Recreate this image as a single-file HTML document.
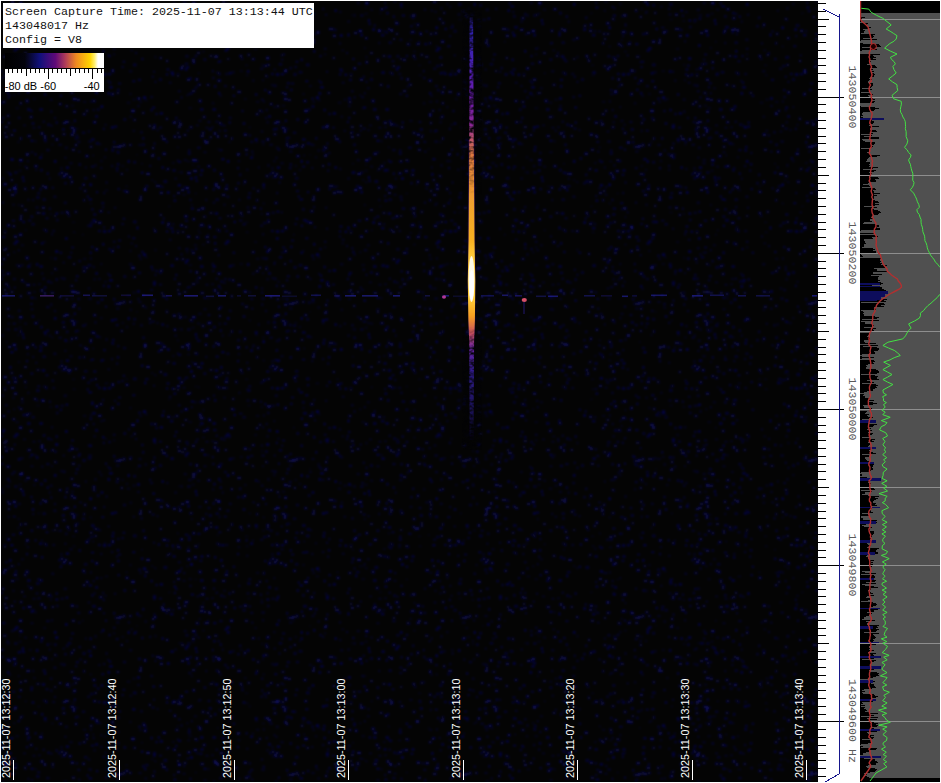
<!DOCTYPE html><html><head><meta charset="utf-8"><style>html,body{margin:0;padding:0;background:#fff;overflow:hidden}svg{display:block}</style></head><body>
<svg width="941" height="783" viewBox="0 0 941 783">
<defs><filter id="nb" x="0" y="0" width="100%" height="100%"><feGaussianBlur stdDeviation="0.9"/></filter><pattern id="p1" patternUnits="userSpaceOnUse" x="1" y="1" width="173" height="157"><g fill="#1212a0"><ellipse cx="41.2" cy="85.4" rx="1.2" ry="1.1" fill-opacity="0.44"/><ellipse cx="11.3" cy="2.1" rx="1.8" ry="0.9" fill-opacity="0.25"/><ellipse cx="172.2" cy="73.8" rx="1.8" ry="1.0" fill-opacity="0.45"/><ellipse cx="26.1" cy="99.7" rx="1.8" ry="1.1" fill-opacity="0.50"/><ellipse cx="116.2" cy="10.1" rx="1.7" ry="1.1" fill-opacity="0.28"/><ellipse cx="5.4" cy="135.9" rx="1.4" ry="1.2" fill-opacity="0.56"/><ellipse cx="123.5" cy="144.6" rx="1.3" ry="1.3" fill-opacity="0.35"/><ellipse cx="161.9" cy="138.0" rx="0.9" ry="0.8" fill-opacity="0.24"/><ellipse cx="167.0" cy="68.5" rx="1.6" ry="0.9" fill-opacity="0.38"/><ellipse cx="66.8" cy="55.1" rx="1.5" ry="1.1" fill-opacity="0.57"/><ellipse cx="118.0" cy="145.8" rx="1.8" ry="1.4" fill-opacity="0.46"/><ellipse cx="28.2" cy="135.1" rx="2.0" ry="1.3" fill-opacity="0.41"/><ellipse cx="123.5" cy="33.1" rx="1.8" ry="1.1" fill-opacity="0.28"/><ellipse cx="11.0" cy="134.1" rx="2.0" ry="0.8" fill-opacity="0.52"/><ellipse cx="71.0" cy="23.7" rx="1.2" ry="1.2" fill-opacity="0.56"/><ellipse cx="7.6" cy="96.5" rx="0.9" ry="1.2" fill-opacity="0.30"/><ellipse cx="152.4" cy="154.0" rx="1.4" ry="1.4" fill-opacity="0.29"/><ellipse cx="13.3" cy="94.2" rx="0.8" ry="0.8" fill-opacity="0.34"/><ellipse cx="105.6" cy="24.5" rx="0.9" ry="1.3" fill-opacity="0.29"/><ellipse cx="165.8" cy="140.8" rx="1.3" ry="1.0" fill-opacity="0.39"/><ellipse cx="111.4" cy="93.5" rx="1.5" ry="1.1" fill-opacity="0.59"/><ellipse cx="87.7" cy="67.7" rx="1.7" ry="0.9" fill-opacity="0.28"/><ellipse cx="169.2" cy="81.8" rx="1.5" ry="0.7" fill-opacity="0.34"/><ellipse cx="100.3" cy="3.1" rx="1.5" ry="1.1" fill-opacity="0.17"/><ellipse cx="108.5" cy="73.2" rx="1.6" ry="0.9" fill-opacity="0.48"/><ellipse cx="127.7" cy="3.5" rx="0.9" ry="1.2" fill-opacity="0.60"/><ellipse cx="43.4" cy="71.6" rx="1.5" ry="0.9" fill-opacity="0.31"/><ellipse cx="54.1" cy="58.0" rx="1.5" ry="0.9" fill-opacity="0.32"/><ellipse cx="133.6" cy="4.2" rx="1.5" ry="1.2" fill-opacity="0.29"/><ellipse cx="38.5" cy="126.2" rx="1.1" ry="0.8" fill-opacity="0.35"/><ellipse cx="120.8" cy="16.0" rx="1.2" ry="0.9" fill-opacity="0.54"/><ellipse cx="75.8" cy="134.3" rx="1.0" ry="0.9" fill-opacity="0.45"/><ellipse cx="153.1" cy="70.8" rx="1.1" ry="0.8" fill-opacity="0.39"/><ellipse cx="33.0" cy="126.7" rx="1.8" ry="0.8" fill-opacity="0.27"/><ellipse cx="139.7" cy="100.8" rx="1.8" ry="0.9" fill-opacity="0.20"/><ellipse cx="50.5" cy="124.6" rx="1.1" ry="0.9" fill-opacity="0.34"/><ellipse cx="72.6" cy="64.3" rx="1.9" ry="0.8" fill-opacity="0.14"/><ellipse cx="163.2" cy="138.2" rx="2.0" ry="1.0" fill-opacity="0.60"/><ellipse cx="160.4" cy="34.9" rx="1.7" ry="1.3" fill-opacity="0.46"/><ellipse cx="89.8" cy="45.4" rx="1.2" ry="0.9" fill-opacity="0.17"/><ellipse cx="101.8" cy="45.1" rx="1.8" ry="0.7" fill-opacity="0.57"/><ellipse cx="120.0" cy="145.0" rx="1.9" ry="1.3" fill-opacity="0.42"/><ellipse cx="2.3" cy="117.0" rx="1.0" ry="0.9" fill-opacity="0.46"/><ellipse cx="90.8" cy="65.0" rx="1.9" ry="1.1" fill-opacity="0.30"/><ellipse cx="43.7" cy="135.3" rx="1.4" ry="1.2" fill-opacity="0.31"/><ellipse cx="34.1" cy="83.9" rx="1.8" ry="0.8" fill-opacity="0.52"/><ellipse cx="159.5" cy="126.6" rx="1.8" ry="0.7" fill-opacity="0.44"/><ellipse cx="149.2" cy="7.8" rx="1.1" ry="0.9" fill-opacity="0.39"/><ellipse cx="73.2" cy="74.2" rx="1.7" ry="0.7" fill-opacity="0.17"/><ellipse cx="21.9" cy="19.6" rx="0.9" ry="1.4" fill-opacity="0.55"/><ellipse cx="14.9" cy="78.8" rx="1.2" ry="0.9" fill-opacity="0.31"/><ellipse cx="111.9" cy="92.1" rx="1.2" ry="0.8" fill-opacity="0.30"/><ellipse cx="21.4" cy="87.2" rx="1.7" ry="1.0" fill-opacity="0.18"/><ellipse cx="30.9" cy="58.6" rx="1.5" ry="1.2" fill-opacity="0.32"/><ellipse cx="138.6" cy="97.8" rx="1.3" ry="1.0" fill-opacity="0.38"/><ellipse cx="121.6" cy="66.0" rx="1.6" ry="1.0" fill-opacity="0.26"/><ellipse cx="92.7" cy="109.1" rx="0.9" ry="1.0" fill-opacity="0.34"/><ellipse cx="152.2" cy="147.0" rx="1.2" ry="1.3" fill-opacity="0.52"/><ellipse cx="45.4" cy="72.9" rx="0.9" ry="1.3" fill-opacity="0.46"/><ellipse cx="153.5" cy="124.4" rx="1.6" ry="1.2" fill-opacity="0.41"/><ellipse cx="17.8" cy="92.3" rx="0.8" ry="0.8" fill-opacity="0.51"/><ellipse cx="7.7" cy="14.4" rx="0.9" ry="1.3" fill-opacity="0.23"/><ellipse cx="4.1" cy="132.1" rx="0.9" ry="1.3" fill-opacity="0.46"/><ellipse cx="144.7" cy="149.5" rx="1.5" ry="1.3" fill-opacity="0.16"/><ellipse cx="132.8" cy="80.3" rx="1.7" ry="0.8" fill-opacity="0.50"/><ellipse cx="161.7" cy="9.6" rx="1.2" ry="1.1" fill-opacity="0.54"/><ellipse cx="41.9" cy="28.2" rx="1.1" ry="1.1" fill-opacity="0.50"/><ellipse cx="68.1" cy="57.7" rx="1.3" ry="0.9" fill-opacity="0.34"/><ellipse cx="14.4" cy="78.5" rx="2.0" ry="1.0" fill-opacity="0.50"/><ellipse cx="27.8" cy="108.5" rx="1.7" ry="1.2" fill-opacity="0.39"/><ellipse cx="83.7" cy="100.9" rx="1.9" ry="0.8" fill-opacity="0.19"/><ellipse cx="129.4" cy="143.9" rx="1.4" ry="1.0" fill-opacity="0.49"/><ellipse cx="32.2" cy="42.0" rx="1.0" ry="1.1" fill-opacity="0.29"/><ellipse cx="40.2" cy="108.5" rx="1.9" ry="0.9" fill-opacity="0.48"/><ellipse cx="71.5" cy="134.0" rx="1.5" ry="0.9" fill-opacity="0.24"/><ellipse cx="4.0" cy="75.3" rx="1.3" ry="0.8" fill-opacity="0.31"/><ellipse cx="55.7" cy="121.6" rx="1.0" ry="1.4" fill-opacity="0.37"/><ellipse cx="103.6" cy="73.5" rx="1.8" ry="1.3" fill-opacity="0.41"/><ellipse cx="83.3" cy="113.2" rx="1.8" ry="1.0" fill-opacity="0.49"/><ellipse cx="166.1" cy="73.4" rx="1.1" ry="0.9" fill-opacity="0.48"/><ellipse cx="116.8" cy="150.5" rx="1.8" ry="0.9" fill-opacity="0.23"/><ellipse cx="44.7" cy="29.4" rx="1.6" ry="1.3" fill-opacity="0.57"/><ellipse cx="44.1" cy="135.8" rx="1.2" ry="1.0" fill-opacity="0.49"/><ellipse cx="14.9" cy="14.5" rx="1.8" ry="0.9" fill-opacity="0.31"/><ellipse cx="100.4" cy="106.1" rx="0.8" ry="0.9" fill-opacity="0.35"/><ellipse cx="84.1" cy="33.0" rx="1.5" ry="1.4" fill-opacity="0.33"/><ellipse cx="94.2" cy="18.7" rx="1.1" ry="1.2" fill-opacity="0.19"/><ellipse cx="153.5" cy="142.7" rx="0.9" ry="1.4" fill-opacity="0.32"/><ellipse cx="133.6" cy="118.9" rx="1.2" ry="1.2" fill-opacity="0.45"/><ellipse cx="139.4" cy="41.7" rx="1.7" ry="1.4" fill-opacity="0.46"/><ellipse cx="92.8" cy="17.8" rx="1.4" ry="0.9" fill-opacity="0.48"/><ellipse cx="117.4" cy="88.9" rx="1.0" ry="1.2" fill-opacity="0.44"/><ellipse cx="31.0" cy="139.7" rx="1.6" ry="0.8" fill-opacity="0.59"/><ellipse cx="24.5" cy="52.1" rx="1.7" ry="1.1" fill-opacity="0.41"/><ellipse cx="112.0" cy="71.9" rx="1.2" ry="0.8" fill-opacity="0.17"/><ellipse cx="123.8" cy="118.5" rx="1.5" ry="1.2" fill-opacity="0.31"/><ellipse cx="46.0" cy="60.2" rx="1.8" ry="0.7" fill-opacity="0.38"/><ellipse cx="42.8" cy="120.7" rx="1.2" ry="0.9" fill-opacity="0.33"/><ellipse cx="93.7" cy="121.2" rx="1.2" ry="1.3" fill-opacity="0.19"/><ellipse cx="46.8" cy="15.6" rx="0.9" ry="1.2" fill-opacity="0.49"/><ellipse cx="32.0" cy="29.7" rx="1.3" ry="1.2" fill-opacity="0.53"/><ellipse cx="129.5" cy="92.9" rx="1.0" ry="1.0" fill-opacity="0.23"/><ellipse cx="91.3" cy="89.2" rx="1.0" ry="0.9" fill-opacity="0.52"/><ellipse cx="5.2" cy="126.1" rx="1.9" ry="1.4" fill-opacity="0.32"/><ellipse cx="95.6" cy="91.5" rx="1.6" ry="1.4" fill-opacity="0.47"/><ellipse cx="51.8" cy="135.0" rx="1.4" ry="1.1" fill-opacity="0.49"/><ellipse cx="0.4" cy="121.0" rx="1.6" ry="1.0" fill-opacity="0.39"/><ellipse cx="79.7" cy="30.4" rx="1.4" ry="0.7" fill-opacity="0.38"/><ellipse cx="111.8" cy="69.7" rx="1.5" ry="1.4" fill-opacity="0.57"/><ellipse cx="23.5" cy="124.4" rx="1.5" ry="0.7" fill-opacity="0.31"/><ellipse cx="40.4" cy="12.2" rx="1.4" ry="1.4" fill-opacity="0.30"/><ellipse cx="150.6" cy="109.1" rx="1.0" ry="1.3" fill-opacity="0.43"/><ellipse cx="160.4" cy="112.4" rx="1.7" ry="0.9" fill-opacity="0.53"/><ellipse cx="161.2" cy="135.2" rx="1.3" ry="1.2" fill-opacity="0.37"/><ellipse cx="18.9" cy="6.7" rx="0.9" ry="0.8" fill-opacity="0.22"/><ellipse cx="86.0" cy="109.8" rx="1.4" ry="1.0" fill-opacity="0.45"/><ellipse cx="52.7" cy="72.9" rx="1.7" ry="1.0" fill-opacity="0.23"/><ellipse cx="155.6" cy="113.0" rx="1.2" ry="1.0" fill-opacity="0.39"/><ellipse cx="103.2" cy="35.1" rx="0.8" ry="0.8" fill-opacity="0.52"/><ellipse cx="24.8" cy="72.2" rx="1.0" ry="0.8" fill-opacity="0.22"/><ellipse cx="69.8" cy="26.4" rx="0.8" ry="0.8" fill-opacity="0.22"/><ellipse cx="84.8" cy="9.4" rx="0.8" ry="1.0" fill-opacity="0.34"/><ellipse cx="121.7" cy="8.0" rx="1.3" ry="1.0" fill-opacity="0.15"/><ellipse cx="167.0" cy="34.4" rx="0.9" ry="1.0" fill-opacity="0.22"/><ellipse cx="107.7" cy="54.4" rx="0.9" ry="0.7" fill-opacity="0.49"/><ellipse cx="47.6" cy="123.7" rx="1.4" ry="1.4" fill-opacity="0.28"/><ellipse cx="43.2" cy="41.7" rx="1.8" ry="1.1" fill-opacity="0.31"/><ellipse cx="16.2" cy="107.1" rx="2.0" ry="1.1" fill-opacity="0.14"/><ellipse cx="5.2" cy="14.2" rx="1.0" ry="0.7" fill-opacity="0.17"/><ellipse cx="113.2" cy="141.3" rx="1.0" ry="1.4" fill-opacity="0.37"/><ellipse cx="139.0" cy="144.0" rx="1.9" ry="0.7" fill-opacity="0.29"/><ellipse cx="105.0" cy="148.6" rx="0.9" ry="0.9" fill-opacity="0.55"/><ellipse cx="19.8" cy="61.2" rx="1.2" ry="1.2" fill-opacity="0.59"/><ellipse cx="30.2" cy="116.1" rx="1.7" ry="1.3" fill-opacity="0.41"/><ellipse cx="159.8" cy="57.0" rx="1.3" ry="0.9" fill-opacity="0.51"/><ellipse cx="83.1" cy="42.3" rx="1.0" ry="1.2" fill-opacity="0.43"/><ellipse cx="122.9" cy="60.7" rx="1.4" ry="0.8" fill-opacity="0.48"/><ellipse cx="4.0" cy="73.3" rx="1.7" ry="1.2" fill-opacity="0.19"/><ellipse cx="41.0" cy="132.5" rx="1.6" ry="1.3" fill-opacity="0.56"/><ellipse cx="77.8" cy="140.8" rx="1.7" ry="0.9" fill-opacity="0.32"/><ellipse cx="12.5" cy="62.7" rx="1.9" ry="0.8" fill-opacity="0.41"/><ellipse cx="19.1" cy="12.7" rx="1.6" ry="0.9" fill-opacity="0.16"/><ellipse cx="26.4" cy="101.2" rx="1.5" ry="0.7" fill-opacity="0.25"/><ellipse cx="167.3" cy="34.6" rx="1.5" ry="1.0" fill-opacity="0.51"/><ellipse cx="104.6" cy="123.8" rx="1.4" ry="0.8" fill-opacity="0.23"/><ellipse cx="13.7" cy="129.6" rx="0.9" ry="0.7" fill-opacity="0.60"/><ellipse cx="34.5" cy="140.2" rx="0.9" ry="1.0" fill-opacity="0.25"/><ellipse cx="143.5" cy="96.6" rx="1.6" ry="1.2" fill-opacity="0.56"/><ellipse cx="59.9" cy="94.7" rx="1.3" ry="0.8" fill-opacity="0.54"/><ellipse cx="102.8" cy="127.9" rx="1.0" ry="1.1" fill-opacity="0.36"/><ellipse cx="125.9" cy="12.1" rx="1.2" ry="1.0" fill-opacity="0.17"/><ellipse cx="95.6" cy="115.4" rx="1.3" ry="1.2" fill-opacity="0.43"/><ellipse cx="37.1" cy="55.0" rx="2.0" ry="0.9" fill-opacity="0.35"/><ellipse cx="14.6" cy="34.2" rx="1.0" ry="1.4" fill-opacity="0.49"/><ellipse cx="151.3" cy="154.9" rx="1.5" ry="1.4" fill-opacity="0.40"/><ellipse cx="72.4" cy="148.8" rx="1.9" ry="1.4" fill-opacity="0.37"/><ellipse cx="133.8" cy="63.9" rx="2.0" ry="1.3" fill-opacity="0.28"/><ellipse cx="161.6" cy="29.0" rx="0.9" ry="1.2" fill-opacity="0.28"/><ellipse cx="89.9" cy="100.4" rx="0.8" ry="1.2" fill-opacity="0.27"/><ellipse cx="74.8" cy="54.1" rx="1.7" ry="1.2" fill-opacity="0.28"/><ellipse cx="17.9" cy="47.0" rx="1.3" ry="0.8" fill-opacity="0.21"/><ellipse cx="132.0" cy="110.0" rx="2.0" ry="1.4" fill-opacity="0.56"/><ellipse cx="64.5" cy="25.3" rx="1.2" ry="1.0" fill-opacity="0.39"/><ellipse cx="93.8" cy="56.5" rx="1.8" ry="0.9" fill-opacity="0.36"/><ellipse cx="153.4" cy="126.7" rx="1.2" ry="0.9" fill-opacity="0.53"/><ellipse cx="1.7" cy="20.6" rx="1.4" ry="1.1" fill-opacity="0.22"/><ellipse cx="8.7" cy="32.0" rx="1.7" ry="1.0" fill-opacity="0.61"/><ellipse cx="135.9" cy="153.7" rx="0.8" ry="0.8" fill-opacity="0.15"/><ellipse cx="74.8" cy="53.1" rx="0.9" ry="1.1" fill-opacity="0.19"/><ellipse cx="53.9" cy="38.8" rx="1.8" ry="1.0" fill-opacity="0.26"/><ellipse cx="7.6" cy="67.4" rx="1.6" ry="1.2" fill-opacity="0.58"/><ellipse cx="139.9" cy="38.8" rx="1.0" ry="1.2" fill-opacity="0.52"/><ellipse cx="88.0" cy="130.5" rx="1.5" ry="0.9" fill-opacity="0.22"/><ellipse cx="2.9" cy="101.0" rx="1.9" ry="1.3" fill-opacity="0.36"/><ellipse cx="115.1" cy="145.8" rx="1.8" ry="1.1" fill-opacity="0.34"/><ellipse cx="89.7" cy="26.8" rx="1.0" ry="1.2" fill-opacity="0.62"/><ellipse cx="94.6" cy="64.1" rx="1.2" ry="1.0" fill-opacity="0.53"/><ellipse cx="78.3" cy="150.6" rx="1.0" ry="0.9" fill-opacity="0.39"/><ellipse cx="71.3" cy="133.6" rx="1.8" ry="1.4" fill-opacity="0.43"/><ellipse cx="5.3" cy="90.2" rx="1.5" ry="1.0" fill-opacity="0.27"/><ellipse cx="122.7" cy="143.1" rx="0.9" ry="1.2" fill-opacity="0.32"/><ellipse cx="89.1" cy="140.6" rx="2.0" ry="1.2" fill-opacity="0.23"/><ellipse cx="159.3" cy="28.4" rx="1.3" ry="1.3" fill-opacity="0.29"/><ellipse cx="46.9" cy="149.1" rx="1.9" ry="0.9" fill-opacity="0.33"/><ellipse cx="48.8" cy="20.6" rx="1.1" ry="1.4" fill-opacity="0.18"/><ellipse cx="39.7" cy="31.4" rx="0.9" ry="1.1" fill-opacity="0.50"/><ellipse cx="145.0" cy="99.1" rx="1.8" ry="0.7" fill-opacity="0.28"/><ellipse cx="166.3" cy="10.9" rx="1.1" ry="1.0" fill-opacity="0.27"/><ellipse cx="94.5" cy="7.4" rx="1.1" ry="1.4" fill-opacity="0.21"/><ellipse cx="156.7" cy="27.9" rx="2.0" ry="1.2" fill-opacity="0.45"/><ellipse cx="24.6" cy="8.6" rx="1.7" ry="0.8" fill-opacity="0.23"/><ellipse cx="142.3" cy="137.3" rx="0.9" ry="1.4" fill-opacity="0.40"/><ellipse cx="66.2" cy="16.8" rx="1.3" ry="1.4" fill-opacity="0.27"/><ellipse cx="22.7" cy="22.8" rx="1.0" ry="0.9" fill-opacity="0.58"/><ellipse cx="13.3" cy="30.1" rx="1.9" ry="1.4" fill-opacity="0.61"/><ellipse cx="42.5" cy="55.6" rx="1.9" ry="1.0" fill-opacity="0.48"/><ellipse cx="54.2" cy="3.4" rx="1.2" ry="1.2" fill-opacity="0.52"/><ellipse cx="98.4" cy="72.9" rx="1.4" ry="1.0" fill-opacity="0.40"/><ellipse cx="144.1" cy="31.5" rx="1.5" ry="1.4" fill-opacity="0.55"/><ellipse cx="31.0" cy="151.3" rx="1.8" ry="0.8" fill-opacity="0.27"/><ellipse cx="35.0" cy="8.3" rx="2.0" ry="1.0" fill-opacity="0.56"/><ellipse cx="19.8" cy="2.2" rx="1.8" ry="1.3" fill-opacity="0.62"/><ellipse cx="118.6" cy="82.5" rx="1.7" ry="0.8" fill-opacity="0.40"/></g></pattern><pattern id="p2" patternUnits="userSpaceOnUse" x="1" y="1" width="211" height="193"><g fill="#1212a0"><ellipse cx="49.8" cy="19.9" rx="1.3" ry="0.8" fill-opacity="0.17"/><ellipse cx="84.7" cy="177.2" rx="1.8" ry="1.2" fill-opacity="0.25"/><ellipse cx="113.2" cy="53.4" rx="1.0" ry="0.8" fill-opacity="0.24"/><ellipse cx="195.7" cy="160.0" rx="1.8" ry="1.3" fill-opacity="0.23"/><ellipse cx="65.4" cy="121.0" rx="1.7" ry="1.3" fill-opacity="0.56"/><ellipse cx="18.3" cy="116.9" rx="1.6" ry="1.1" fill-opacity="0.23"/><ellipse cx="99.9" cy="17.2" rx="1.9" ry="1.3" fill-opacity="0.40"/><ellipse cx="63.4" cy="175.4" rx="1.5" ry="1.3" fill-opacity="0.55"/><ellipse cx="107.3" cy="79.9" rx="1.5" ry="1.0" fill-opacity="0.22"/><ellipse cx="64.4" cy="156.8" rx="0.9" ry="0.7" fill-opacity="0.44"/><ellipse cx="59.2" cy="103.2" rx="1.4" ry="0.9" fill-opacity="0.62"/><ellipse cx="41.3" cy="79.7" rx="1.0" ry="1.1" fill-opacity="0.27"/><ellipse cx="75.1" cy="144.2" rx="1.2" ry="1.1" fill-opacity="0.57"/><ellipse cx="21.3" cy="11.9" rx="1.1" ry="1.2" fill-opacity="0.44"/><ellipse cx="50.1" cy="63.9" rx="1.0" ry="1.0" fill-opacity="0.16"/><ellipse cx="147.1" cy="172.9" rx="1.9" ry="1.2" fill-opacity="0.60"/><ellipse cx="3.8" cy="55.8" rx="2.0" ry="1.2" fill-opacity="0.34"/><ellipse cx="199.0" cy="119.8" rx="1.8" ry="0.9" fill-opacity="0.23"/><ellipse cx="93.7" cy="26.3" rx="1.3" ry="1.4" fill-opacity="0.30"/><ellipse cx="2.0" cy="8.6" rx="1.0" ry="1.2" fill-opacity="0.31"/><ellipse cx="61.3" cy="18.7" rx="2.0" ry="1.0" fill-opacity="0.24"/><ellipse cx="12.5" cy="10.7" rx="1.0" ry="1.2" fill-opacity="0.21"/><ellipse cx="8.6" cy="94.7" rx="1.1" ry="1.4" fill-opacity="0.20"/><ellipse cx="111.7" cy="149.3" rx="1.3" ry="1.4" fill-opacity="0.37"/><ellipse cx="51.0" cy="79.3" rx="0.8" ry="1.0" fill-opacity="0.26"/><ellipse cx="187.6" cy="160.4" rx="1.4" ry="0.7" fill-opacity="0.26"/><ellipse cx="51.1" cy="40.2" rx="1.1" ry="1.3" fill-opacity="0.21"/><ellipse cx="10.8" cy="179.1" rx="1.5" ry="1.4" fill-opacity="0.33"/><ellipse cx="190.1" cy="126.2" rx="1.7" ry="1.2" fill-opacity="0.38"/><ellipse cx="19.6" cy="40.7" rx="1.8" ry="1.3" fill-opacity="0.58"/><ellipse cx="71.0" cy="126.8" rx="1.8" ry="1.1" fill-opacity="0.53"/><ellipse cx="111.4" cy="126.4" rx="1.6" ry="0.9" fill-opacity="0.58"/><ellipse cx="201.8" cy="14.4" rx="2.0" ry="1.4" fill-opacity="0.46"/><ellipse cx="9.4" cy="173.5" rx="1.0" ry="1.4" fill-opacity="0.46"/><ellipse cx="12.8" cy="32.3" rx="1.6" ry="1.1" fill-opacity="0.50"/><ellipse cx="195.7" cy="42.2" rx="0.8" ry="1.3" fill-opacity="0.15"/><ellipse cx="184.9" cy="22.4" rx="1.8" ry="1.2" fill-opacity="0.56"/><ellipse cx="116.2" cy="169.6" rx="1.0" ry="1.2" fill-opacity="0.30"/><ellipse cx="188.2" cy="149.3" rx="1.4" ry="1.1" fill-opacity="0.15"/><ellipse cx="7.2" cy="114.7" rx="1.4" ry="1.3" fill-opacity="0.43"/><ellipse cx="29.3" cy="70.0" rx="1.7" ry="1.1" fill-opacity="0.15"/><ellipse cx="176.8" cy="159.7" rx="0.9" ry="1.1" fill-opacity="0.32"/><ellipse cx="166.1" cy="60.1" rx="1.1" ry="1.0" fill-opacity="0.60"/><ellipse cx="20.1" cy="22.1" rx="1.5" ry="1.3" fill-opacity="0.39"/><ellipse cx="91.6" cy="165.6" rx="1.7" ry="0.7" fill-opacity="0.56"/><ellipse cx="41.3" cy="58.3" rx="1.8" ry="1.0" fill-opacity="0.52"/><ellipse cx="35.3" cy="168.7" rx="1.0" ry="0.8" fill-opacity="0.38"/><ellipse cx="71.4" cy="104.6" rx="1.9" ry="1.2" fill-opacity="0.14"/><ellipse cx="65.8" cy="105.2" rx="1.4" ry="1.2" fill-opacity="0.37"/><ellipse cx="16.0" cy="47.4" rx="1.8" ry="0.9" fill-opacity="0.51"/><ellipse cx="208.0" cy="121.0" rx="1.6" ry="1.1" fill-opacity="0.29"/><ellipse cx="192.6" cy="90.1" rx="1.9" ry="0.9" fill-opacity="0.56"/><ellipse cx="166.0" cy="118.3" rx="1.3" ry="0.8" fill-opacity="0.51"/><ellipse cx="76.4" cy="127.8" rx="1.0" ry="0.8" fill-opacity="0.21"/><ellipse cx="170.7" cy="34.3" rx="1.9" ry="1.0" fill-opacity="0.42"/><ellipse cx="73.9" cy="119.8" rx="0.9" ry="1.0" fill-opacity="0.59"/><ellipse cx="37.9" cy="126.3" rx="1.2" ry="0.9" fill-opacity="0.15"/><ellipse cx="4.2" cy="183.2" rx="1.8" ry="1.3" fill-opacity="0.53"/><ellipse cx="201.2" cy="30.6" rx="1.5" ry="1.0" fill-opacity="0.42"/><ellipse cx="197.9" cy="146.7" rx="2.0" ry="0.8" fill-opacity="0.45"/><ellipse cx="142.5" cy="143.8" rx="1.5" ry="1.3" fill-opacity="0.29"/><ellipse cx="195.8" cy="78.4" rx="1.5" ry="1.3" fill-opacity="0.48"/><ellipse cx="65.3" cy="44.5" rx="1.2" ry="1.1" fill-opacity="0.62"/><ellipse cx="189.7" cy="77.2" rx="1.3" ry="1.3" fill-opacity="0.28"/><ellipse cx="86.8" cy="2.5" rx="1.0" ry="1.1" fill-opacity="0.47"/><ellipse cx="129.7" cy="70.3" rx="1.9" ry="1.1" fill-opacity="0.21"/><ellipse cx="14.3" cy="187.9" rx="2.0" ry="1.3" fill-opacity="0.43"/><ellipse cx="65.9" cy="17.6" rx="1.1" ry="0.9" fill-opacity="0.59"/><ellipse cx="188.3" cy="150.1" rx="1.0" ry="0.9" fill-opacity="0.28"/><ellipse cx="200.0" cy="31.5" rx="1.7" ry="1.2" fill-opacity="0.40"/><ellipse cx="202.4" cy="50.6" rx="1.4" ry="0.8" fill-opacity="0.19"/><ellipse cx="6.7" cy="61.1" rx="0.9" ry="0.7" fill-opacity="0.62"/><ellipse cx="61.0" cy="171.8" rx="1.6" ry="1.2" fill-opacity="0.45"/><ellipse cx="201.0" cy="169.5" rx="1.7" ry="1.1" fill-opacity="0.47"/><ellipse cx="152.7" cy="106.6" rx="1.4" ry="0.8" fill-opacity="0.55"/><ellipse cx="102.2" cy="13.1" rx="1.0" ry="1.3" fill-opacity="0.26"/><ellipse cx="82.6" cy="131.7" rx="1.8" ry="0.9" fill-opacity="0.33"/><ellipse cx="89.3" cy="5.4" rx="1.9" ry="0.7" fill-opacity="0.60"/><ellipse cx="32.2" cy="30.2" rx="1.8" ry="1.3" fill-opacity="0.25"/><ellipse cx="116.8" cy="92.0" rx="1.7" ry="0.8" fill-opacity="0.54"/><ellipse cx="210.2" cy="136.3" rx="1.9" ry="1.4" fill-opacity="0.32"/><ellipse cx="178.8" cy="160.9" rx="1.5" ry="0.8" fill-opacity="0.44"/><ellipse cx="192.4" cy="58.9" rx="1.6" ry="1.3" fill-opacity="0.43"/><ellipse cx="7.9" cy="122.0" rx="1.1" ry="1.3" fill-opacity="0.46"/><ellipse cx="64.9" cy="172.9" rx="1.6" ry="0.9" fill-opacity="0.54"/><ellipse cx="188.1" cy="172.4" rx="1.9" ry="1.2" fill-opacity="0.48"/><ellipse cx="127.6" cy="101.7" rx="2.0" ry="0.9" fill-opacity="0.18"/><ellipse cx="150.6" cy="96.1" rx="1.5" ry="1.1" fill-opacity="0.26"/><ellipse cx="42.4" cy="13.8" rx="1.7" ry="1.3" fill-opacity="0.47"/><ellipse cx="24.6" cy="188.9" rx="1.8" ry="1.1" fill-opacity="0.14"/><ellipse cx="178.1" cy="120.3" rx="1.5" ry="0.7" fill-opacity="0.49"/><ellipse cx="7.2" cy="92.3" rx="1.0" ry="1.0" fill-opacity="0.57"/><ellipse cx="157.9" cy="157.5" rx="1.2" ry="1.0" fill-opacity="0.43"/><ellipse cx="7.2" cy="79.6" rx="2.0" ry="1.2" fill-opacity="0.55"/><ellipse cx="63.0" cy="133.3" rx="1.7" ry="1.2" fill-opacity="0.35"/><ellipse cx="36.9" cy="3.5" rx="1.9" ry="1.4" fill-opacity="0.27"/><ellipse cx="159.5" cy="78.6" rx="1.6" ry="1.3" fill-opacity="0.29"/><ellipse cx="130.8" cy="49.4" rx="1.4" ry="0.7" fill-opacity="0.27"/><ellipse cx="60.6" cy="176.5" rx="1.0" ry="1.2" fill-opacity="0.18"/><ellipse cx="208.1" cy="32.0" rx="0.9" ry="0.8" fill-opacity="0.59"/><ellipse cx="141.1" cy="171.9" rx="1.4" ry="0.8" fill-opacity="0.30"/><ellipse cx="96.1" cy="191.1" rx="1.0" ry="0.9" fill-opacity="0.54"/><ellipse cx="24.1" cy="187.5" rx="1.2" ry="1.1" fill-opacity="0.46"/><ellipse cx="191.4" cy="14.6" rx="1.8" ry="0.8" fill-opacity="0.48"/><ellipse cx="5.7" cy="148.0" rx="1.0" ry="0.8" fill-opacity="0.16"/><ellipse cx="68.5" cy="63.3" rx="2.0" ry="1.1" fill-opacity="0.31"/><ellipse cx="208.9" cy="33.2" rx="1.1" ry="1.4" fill-opacity="0.60"/><ellipse cx="144.3" cy="188.9" rx="0.9" ry="1.3" fill-opacity="0.48"/><ellipse cx="141.0" cy="162.7" rx="0.9" ry="0.8" fill-opacity="0.21"/><ellipse cx="101.0" cy="105.4" rx="1.4" ry="1.0" fill-opacity="0.50"/><ellipse cx="176.9" cy="146.4" rx="0.8" ry="0.8" fill-opacity="0.25"/><ellipse cx="50.3" cy="110.7" rx="1.0" ry="1.1" fill-opacity="0.31"/><ellipse cx="76.7" cy="136.7" rx="1.9" ry="0.8" fill-opacity="0.31"/><ellipse cx="207.1" cy="41.0" rx="0.8" ry="0.8" fill-opacity="0.54"/><ellipse cx="154.3" cy="181.1" rx="1.4" ry="0.7" fill-opacity="0.29"/><ellipse cx="151.8" cy="75.8" rx="1.0" ry="1.0" fill-opacity="0.36"/><ellipse cx="75.1" cy="86.2" rx="1.0" ry="0.7" fill-opacity="0.52"/><ellipse cx="154.5" cy="80.8" rx="0.9" ry="0.9" fill-opacity="0.41"/><ellipse cx="188.8" cy="93.0" rx="2.0" ry="1.1" fill-opacity="0.23"/><ellipse cx="129.8" cy="115.8" rx="1.5" ry="1.2" fill-opacity="0.15"/><ellipse cx="92.2" cy="154.5" rx="1.0" ry="0.7" fill-opacity="0.23"/><ellipse cx="60.3" cy="84.0" rx="1.2" ry="1.1" fill-opacity="0.22"/><ellipse cx="72.9" cy="130.4" rx="1.5" ry="1.4" fill-opacity="0.59"/><ellipse cx="54.4" cy="64.7" rx="1.4" ry="1.1" fill-opacity="0.32"/><ellipse cx="182.0" cy="38.0" rx="1.4" ry="0.8" fill-opacity="0.56"/><ellipse cx="125.7" cy="190.6" rx="1.0" ry="1.2" fill-opacity="0.43"/><ellipse cx="10.9" cy="158.3" rx="1.8" ry="0.8" fill-opacity="0.59"/><ellipse cx="165.6" cy="116.7" rx="1.5" ry="0.9" fill-opacity="0.17"/><ellipse cx="100.3" cy="167.1" rx="1.1" ry="1.0" fill-opacity="0.28"/><ellipse cx="145.8" cy="185.2" rx="1.9" ry="0.9" fill-opacity="0.34"/><ellipse cx="0.6" cy="102.2" rx="1.8" ry="1.3" fill-opacity="0.17"/><ellipse cx="91.4" cy="15.4" rx="1.3" ry="1.3" fill-opacity="0.28"/><ellipse cx="178.4" cy="184.4" rx="1.8" ry="0.8" fill-opacity="0.58"/><ellipse cx="194.7" cy="192.7" rx="0.8" ry="0.7" fill-opacity="0.28"/><ellipse cx="109.2" cy="81.8" rx="0.9" ry="1.1" fill-opacity="0.46"/><ellipse cx="133.0" cy="98.6" rx="1.5" ry="1.2" fill-opacity="0.17"/><ellipse cx="92.0" cy="26.2" rx="0.9" ry="1.2" fill-opacity="0.30"/><ellipse cx="71.6" cy="53.5" rx="1.5" ry="0.8" fill-opacity="0.45"/><ellipse cx="14.9" cy="184.4" rx="1.0" ry="1.2" fill-opacity="0.40"/><ellipse cx="89.7" cy="58.7" rx="1.2" ry="1.2" fill-opacity="0.39"/><ellipse cx="113.2" cy="47.8" rx="1.5" ry="0.8" fill-opacity="0.37"/><ellipse cx="137.5" cy="105.0" rx="1.5" ry="1.1" fill-opacity="0.23"/><ellipse cx="202.1" cy="132.0" rx="1.7" ry="1.4" fill-opacity="0.36"/><ellipse cx="70.2" cy="58.7" rx="1.2" ry="0.9" fill-opacity="0.29"/><ellipse cx="44.1" cy="93.4" rx="1.2" ry="1.0" fill-opacity="0.46"/><ellipse cx="66.5" cy="166.6" rx="1.8" ry="0.9" fill-opacity="0.54"/><ellipse cx="37.2" cy="18.5" rx="2.0" ry="0.7" fill-opacity="0.14"/><ellipse cx="183.0" cy="0.5" rx="1.6" ry="1.1" fill-opacity="0.25"/><ellipse cx="51.8" cy="186.7" rx="1.3" ry="0.9" fill-opacity="0.35"/><ellipse cx="154.5" cy="56.1" rx="0.9" ry="1.3" fill-opacity="0.19"/><ellipse cx="11.7" cy="0.9" rx="2.0" ry="1.0" fill-opacity="0.49"/><ellipse cx="117.7" cy="188.1" rx="1.2" ry="0.9" fill-opacity="0.47"/><ellipse cx="0.1" cy="70.2" rx="1.7" ry="1.1" fill-opacity="0.38"/><ellipse cx="197.7" cy="83.5" rx="1.7" ry="1.0" fill-opacity="0.18"/><ellipse cx="81.8" cy="40.7" rx="0.8" ry="0.9" fill-opacity="0.20"/><ellipse cx="96.3" cy="142.4" rx="1.7" ry="1.3" fill-opacity="0.29"/><ellipse cx="141.3" cy="171.6" rx="1.3" ry="1.3" fill-opacity="0.19"/><ellipse cx="194.3" cy="170.1" rx="2.0" ry="1.3" fill-opacity="0.48"/><ellipse cx="91.8" cy="138.5" rx="1.9" ry="1.1" fill-opacity="0.44"/><ellipse cx="195.0" cy="54.9" rx="1.2" ry="0.7" fill-opacity="0.56"/><ellipse cx="132.8" cy="129.8" rx="1.1" ry="0.8" fill-opacity="0.37"/><ellipse cx="185.1" cy="68.5" rx="1.3" ry="1.0" fill-opacity="0.55"/><ellipse cx="26.1" cy="167.1" rx="0.8" ry="1.2" fill-opacity="0.51"/><ellipse cx="99.1" cy="143.2" rx="1.1" ry="0.8" fill-opacity="0.31"/><ellipse cx="55.9" cy="138.4" rx="1.5" ry="1.2" fill-opacity="0.61"/><ellipse cx="163.2" cy="152.8" rx="2.0" ry="1.4" fill-opacity="0.50"/><ellipse cx="73.4" cy="98.1" rx="1.7" ry="1.3" fill-opacity="0.57"/><ellipse cx="156.6" cy="129.1" rx="1.1" ry="1.1" fill-opacity="0.23"/><ellipse cx="136.5" cy="34.0" rx="0.8" ry="1.4" fill-opacity="0.56"/><ellipse cx="64.3" cy="8.7" rx="1.8" ry="1.2" fill-opacity="0.21"/><ellipse cx="172.4" cy="161.8" rx="1.5" ry="0.9" fill-opacity="0.17"/><ellipse cx="13.4" cy="85.1" rx="1.7" ry="1.1" fill-opacity="0.25"/><ellipse cx="168.4" cy="12.2" rx="1.5" ry="0.8" fill-opacity="0.14"/><ellipse cx="40.8" cy="153.6" rx="1.1" ry="0.7" fill-opacity="0.37"/><ellipse cx="73.6" cy="110.8" rx="1.5" ry="1.2" fill-opacity="0.58"/><ellipse cx="71.4" cy="122.6" rx="0.9" ry="0.9" fill-opacity="0.19"/><ellipse cx="181.9" cy="65.2" rx="1.7" ry="1.3" fill-opacity="0.32"/><ellipse cx="43.6" cy="47.9" rx="1.4" ry="1.0" fill-opacity="0.17"/><ellipse cx="179.4" cy="123.4" rx="1.8" ry="1.3" fill-opacity="0.49"/><ellipse cx="173.9" cy="135.8" rx="1.3" ry="1.3" fill-opacity="0.58"/><ellipse cx="22.7" cy="27.9" rx="1.0" ry="1.0" fill-opacity="0.55"/><ellipse cx="111.1" cy="165.1" rx="1.2" ry="1.1" fill-opacity="0.26"/><ellipse cx="135.1" cy="52.1" rx="0.8" ry="1.0" fill-opacity="0.41"/><ellipse cx="185.9" cy="55.3" rx="1.9" ry="1.3" fill-opacity="0.22"/><ellipse cx="164.3" cy="180.5" rx="2.0" ry="1.2" fill-opacity="0.33"/><ellipse cx="114.7" cy="125.6" rx="1.5" ry="0.8" fill-opacity="0.56"/><ellipse cx="114.1" cy="13.8" rx="1.2" ry="0.8" fill-opacity="0.36"/><ellipse cx="19.8" cy="102.2" rx="1.1" ry="1.3" fill-opacity="0.51"/><ellipse cx="39.6" cy="156.6" rx="1.5" ry="0.9" fill-opacity="0.58"/><ellipse cx="1.3" cy="77.0" rx="1.5" ry="0.8" fill-opacity="0.38"/><ellipse cx="186.6" cy="66.3" rx="1.7" ry="0.8" fill-opacity="0.61"/><ellipse cx="203.4" cy="31.8" rx="1.7" ry="0.9" fill-opacity="0.16"/><ellipse cx="44.5" cy="140.7" rx="1.4" ry="1.1" fill-opacity="0.20"/><ellipse cx="36.2" cy="70.5" rx="1.4" ry="1.3" fill-opacity="0.36"/><ellipse cx="69.2" cy="176.3" rx="1.6" ry="1.2" fill-opacity="0.53"/><ellipse cx="102.3" cy="50.2" rx="0.9" ry="1.2" fill-opacity="0.50"/><ellipse cx="190.4" cy="177.4" rx="1.4" ry="1.0" fill-opacity="0.60"/><ellipse cx="18.1" cy="72.3" rx="1.5" ry="1.1" fill-opacity="0.43"/><ellipse cx="33.4" cy="98.1" rx="1.0" ry="1.0" fill-opacity="0.23"/><ellipse cx="67.5" cy="121.0" rx="1.3" ry="0.8" fill-opacity="0.37"/><ellipse cx="141.4" cy="58.1" rx="1.1" ry="1.0" fill-opacity="0.47"/><ellipse cx="7.7" cy="129.9" rx="0.9" ry="1.3" fill-opacity="0.23"/><ellipse cx="173.9" cy="6.6" rx="1.4" ry="0.9" fill-opacity="0.51"/><ellipse cx="162.7" cy="24.5" rx="0.9" ry="1.2" fill-opacity="0.34"/><ellipse cx="78.7" cy="67.2" rx="1.2" ry="1.1" fill-opacity="0.33"/><ellipse cx="27.2" cy="91.0" rx="2.0" ry="1.2" fill-opacity="0.48"/><ellipse cx="195.7" cy="85.8" rx="1.2" ry="1.3" fill-opacity="0.19"/><ellipse cx="161.7" cy="28.6" rx="1.5" ry="1.1" fill-opacity="0.51"/><ellipse cx="13.3" cy="129.6" rx="1.8" ry="0.7" fill-opacity="0.47"/><ellipse cx="59.1" cy="143.7" rx="2.0" ry="0.7" fill-opacity="0.34"/><ellipse cx="105.4" cy="189.4" rx="1.9" ry="0.7" fill-opacity="0.21"/><ellipse cx="86.0" cy="155.2" rx="1.7" ry="1.1" fill-opacity="0.58"/><ellipse cx="173.1" cy="169.4" rx="1.6" ry="0.9" fill-opacity="0.49"/><ellipse cx="151.2" cy="179.1" rx="1.0" ry="0.7" fill-opacity="0.30"/><ellipse cx="54.0" cy="74.7" rx="0.9" ry="1.1" fill-opacity="0.35"/><ellipse cx="55.9" cy="19.6" rx="1.5" ry="0.8" fill-opacity="0.55"/><ellipse cx="58.4" cy="173.3" rx="0.9" ry="1.0" fill-opacity="0.51"/><ellipse cx="110.0" cy="86.4" rx="1.9" ry="0.8" fill-opacity="0.55"/><ellipse cx="108.6" cy="55.1" rx="1.2" ry="0.9" fill-opacity="0.44"/><ellipse cx="93.0" cy="100.0" rx="1.6" ry="1.3" fill-opacity="0.48"/><ellipse cx="62.4" cy="128.5" rx="1.6" ry="1.3" fill-opacity="0.33"/><ellipse cx="112.3" cy="146.0" rx="1.2" ry="0.9" fill-opacity="0.44"/><ellipse cx="78.8" cy="163.5" rx="1.2" ry="0.9" fill-opacity="0.43"/><ellipse cx="126.3" cy="191.1" rx="1.9" ry="1.0" fill-opacity="0.36"/><ellipse cx="137.5" cy="97.4" rx="1.5" ry="1.0" fill-opacity="0.55"/><ellipse cx="188.3" cy="152.6" rx="1.7" ry="1.3" fill-opacity="0.26"/><ellipse cx="198.7" cy="38.9" rx="0.9" ry="1.0" fill-opacity="0.22"/><ellipse cx="54.0" cy="116.9" rx="1.0" ry="1.0" fill-opacity="0.32"/><ellipse cx="199.0" cy="15.2" rx="1.4" ry="1.0" fill-opacity="0.22"/><ellipse cx="73.1" cy="70.1" rx="1.2" ry="1.1" fill-opacity="0.41"/><ellipse cx="98.4" cy="85.0" rx="1.5" ry="1.0" fill-opacity="0.20"/><ellipse cx="138.5" cy="78.9" rx="1.8" ry="0.8" fill-opacity="0.40"/><ellipse cx="63.2" cy="122.1" rx="1.8" ry="1.2" fill-opacity="0.41"/><ellipse cx="196.5" cy="43.6" rx="2.0" ry="1.0" fill-opacity="0.44"/><ellipse cx="27.4" cy="5.8" rx="1.0" ry="1.1" fill-opacity="0.26"/><ellipse cx="167.7" cy="29.9" rx="1.6" ry="1.3" fill-opacity="0.47"/><ellipse cx="194.7" cy="159.0" rx="1.8" ry="0.7" fill-opacity="0.39"/><ellipse cx="63.1" cy="84.7" rx="1.7" ry="1.2" fill-opacity="0.24"/><ellipse cx="36.1" cy="13.5" rx="1.7" ry="1.3" fill-opacity="0.18"/><ellipse cx="28.8" cy="26.6" rx="2.0" ry="0.7" fill-opacity="0.42"/><ellipse cx="184.9" cy="32.9" rx="1.6" ry="0.9" fill-opacity="0.45"/><ellipse cx="98.8" cy="28.8" rx="1.9" ry="1.1" fill-opacity="0.61"/><ellipse cx="125.6" cy="185.2" rx="1.6" ry="0.7" fill-opacity="0.14"/><ellipse cx="209.3" cy="128.5" rx="1.7" ry="1.3" fill-opacity="0.31"/><ellipse cx="148.8" cy="124.9" rx="0.9" ry="1.1" fill-opacity="0.59"/><ellipse cx="117.4" cy="151.9" rx="0.9" ry="1.0" fill-opacity="0.38"/><ellipse cx="117.1" cy="163.3" rx="1.4" ry="1.1" fill-opacity="0.39"/><ellipse cx="142.3" cy="111.9" rx="1.3" ry="0.9" fill-opacity="0.55"/><ellipse cx="74.8" cy="137.6" rx="1.1" ry="1.4" fill-opacity="0.24"/><ellipse cx="88.6" cy="71.2" rx="1.9" ry="1.2" fill-opacity="0.27"/><ellipse cx="51.4" cy="143.5" rx="1.3" ry="0.8" fill-opacity="0.20"/><ellipse cx="152.1" cy="127.6" rx="1.8" ry="0.8" fill-opacity="0.37"/><ellipse cx="30.5" cy="110.0" rx="1.1" ry="0.9" fill-opacity="0.41"/><ellipse cx="34.6" cy="153.3" rx="1.0" ry="0.9" fill-opacity="0.50"/><ellipse cx="55.7" cy="57.6" rx="1.7" ry="1.1" fill-opacity="0.53"/><ellipse cx="183.3" cy="185.9" rx="0.9" ry="1.0" fill-opacity="0.36"/><ellipse cx="60.5" cy="167.4" rx="1.3" ry="1.3" fill-opacity="0.17"/><ellipse cx="93.7" cy="121.3" rx="1.7" ry="1.0" fill-opacity="0.57"/><ellipse cx="62.7" cy="68.6" rx="1.0" ry="0.8" fill-opacity="0.37"/><ellipse cx="154.3" cy="37.2" rx="1.4" ry="1.0" fill-opacity="0.61"/><ellipse cx="104.0" cy="156.2" rx="1.1" ry="1.3" fill-opacity="0.15"/><ellipse cx="32.0" cy="122.5" rx="1.4" ry="1.1" fill-opacity="0.44"/><ellipse cx="73.4" cy="127.8" rx="1.3" ry="1.1" fill-opacity="0.48"/><ellipse cx="65.3" cy="146.9" rx="1.8" ry="1.4" fill-opacity="0.17"/><ellipse cx="89.9" cy="31.7" rx="1.0" ry="1.0" fill-opacity="0.51"/><ellipse cx="26.4" cy="153.5" rx="1.8" ry="1.4" fill-opacity="0.50"/><ellipse cx="44.2" cy="138.5" rx="1.5" ry="0.9" fill-opacity="0.52"/><ellipse cx="70.0" cy="162.2" rx="1.9" ry="1.0" fill-opacity="0.20"/><ellipse cx="172.1" cy="30.3" rx="0.9" ry="1.3" fill-opacity="0.25"/><ellipse cx="55.0" cy="75.6" rx="1.7" ry="0.8" fill-opacity="0.29"/><ellipse cx="14.1" cy="49.5" rx="1.7" ry="1.1" fill-opacity="0.43"/><ellipse cx="189.5" cy="5.9" rx="1.1" ry="1.1" fill-opacity="0.31"/><ellipse cx="206.1" cy="43.1" rx="2.0" ry="1.2" fill-opacity="0.46"/><ellipse cx="198.7" cy="83.7" rx="1.2" ry="1.0" fill-opacity="0.49"/><ellipse cx="173.3" cy="121.8" rx="1.8" ry="1.2" fill-opacity="0.51"/><ellipse cx="27.0" cy="160.2" rx="1.4" ry="0.9" fill-opacity="0.20"/><ellipse cx="128.0" cy="42.4" rx="1.2" ry="1.1" fill-opacity="0.24"/><ellipse cx="48.9" cy="14.7" rx="1.2" ry="1.3" fill-opacity="0.26"/><ellipse cx="56.3" cy="26.0" rx="1.5" ry="1.2" fill-opacity="0.23"/><ellipse cx="173.2" cy="2.0" rx="0.9" ry="0.8" fill-opacity="0.52"/><ellipse cx="17.5" cy="141.0" rx="1.1" ry="0.9" fill-opacity="0.19"/><ellipse cx="171.1" cy="71.6" rx="1.9" ry="1.2" fill-opacity="0.41"/><ellipse cx="97.2" cy="108.6" rx="1.5" ry="1.4" fill-opacity="0.25"/><ellipse cx="37.7" cy="192.7" rx="1.6" ry="1.1" fill-opacity="0.37"/><ellipse cx="2.8" cy="43.1" rx="1.8" ry="0.9" fill-opacity="0.43"/><ellipse cx="103.0" cy="33.3" rx="0.9" ry="0.7" fill-opacity="0.48"/><ellipse cx="50.2" cy="98.6" rx="1.5" ry="1.2" fill-opacity="0.22"/><ellipse cx="90.1" cy="145.8" rx="1.6" ry="1.0" fill-opacity="0.45"/><ellipse cx="166.0" cy="169.2" rx="1.4" ry="0.8" fill-opacity="0.20"/><ellipse cx="140.5" cy="131.2" rx="1.3" ry="1.2" fill-opacity="0.24"/><ellipse cx="83.1" cy="73.5" rx="1.7" ry="1.4" fill-opacity="0.27"/><ellipse cx="21.0" cy="71.3" rx="1.8" ry="1.4" fill-opacity="0.17"/><ellipse cx="70.9" cy="91.9" rx="1.9" ry="1.1" fill-opacity="0.35"/><ellipse cx="205.4" cy="141.6" rx="1.9" ry="1.3" fill-opacity="0.61"/><ellipse cx="144.2" cy="150.7" rx="1.4" ry="1.2" fill-opacity="0.59"/><ellipse cx="200.0" cy="173.8" rx="1.6" ry="1.0" fill-opacity="0.34"/><ellipse cx="82.6" cy="183.8" rx="1.6" ry="1.3" fill-opacity="0.46"/><ellipse cx="21.2" cy="86.5" rx="1.2" ry="1.4" fill-opacity="0.47"/><ellipse cx="77.2" cy="98.9" rx="1.9" ry="1.1" fill-opacity="0.48"/><ellipse cx="76.4" cy="82.3" rx="1.7" ry="0.8" fill-opacity="0.46"/><ellipse cx="177.5" cy="192.1" rx="1.4" ry="1.1" fill-opacity="0.62"/><ellipse cx="167.4" cy="167.7" rx="1.4" ry="0.8" fill-opacity="0.54"/><ellipse cx="19.9" cy="137.6" rx="1.1" ry="1.3" fill-opacity="0.45"/><ellipse cx="107.8" cy="92.5" rx="1.2" ry="1.4" fill-opacity="0.41"/><ellipse cx="202.5" cy="23.1" rx="0.8" ry="0.8" fill-opacity="0.29"/></g></pattern></defs>
<defs>
<filter id="nz" x="0" y="0" width="100%" height="100%" color-interpolation-filters="sRGB">
<feTurbulence type="fractalNoise" baseFrequency="0.22 0.25" numOctaves="2" seed="11" result="t"/>
<feColorMatrix in="t" type="matrix" values="0 0 0 0 0.04  0 0 0 0 0.04  0 0 0 0 0.42  3.2 0 0 0 -2.0"/><feGaussianBlur stdDeviation="0.7"/>
</filter>
<filter id="mtx" x="0" y="0" width="100%" height="100%" color-interpolation-filters="sRGB"><feTurbulence type="fractalNoise" baseFrequency="0.2 0.3" numOctaves="2" seed="5"/><feColorMatrix type="matrix" values="0 0 0 0 0.01  0 0 0 0 0.01  0 0 0 0 0.02  2.4 0 0 0 -0.85"/><feGaussianBlur stdDeviation="0.6"/></filter>
<linearGradient id="mg" gradientUnits="userSpaceOnUse" x1="0" y1="10" x2="0" y2="450"><stop offset="0" stop-color="#fff"/><stop offset="0.3" stop-color="#fff"/><stop offset="0.42" stop-color="#000"/><stop offset="0.72" stop-color="#000"/><stop offset="0.77" stop-color="#fff"/><stop offset="1" stop-color="#fff"/></linearGradient>
<mask id="mm" maskUnits="userSpaceOnUse" x="0" y="0" width="941" height="783"><rect x="462" y="10" width="20" height="440" fill="url(#mg)"/></mask>
<filter id="bl" x="-50%" y="-5%" width="200%" height="110%"><feGaussianBlur stdDeviation="0.7"/></filter>
<linearGradient id="cb" x1="0" x2="1" y1="0" y2="0">
<stop offset="0" stop-color="#000"/><stop offset="0.2" stop-color="#03030c"/><stop offset="0.35" stop-color="#10107a"/><stop offset="0.51" stop-color="#600a78"/><stop offset="0.61" stop-color="#b03c58"/><stop offset="0.72" stop-color="#f08a20"/><stop offset="0.86" stop-color="#ffd400"/><stop offset="0.905" stop-color="#fff070"/><stop offset="0.94" stop-color="#fff"/><stop offset="1" stop-color="#fff"/>
</linearGradient>
<linearGradient id="mt" gradientUnits="userSpaceOnUse" x1="0" y1="15" x2="0" y2="445">
<stop offset="0" stop-color="#3020b0" stop-opacity="0.3"/>
<stop offset="0.035" stop-color="#3424c0" stop-opacity="0.85"/>
<stop offset="0.12" stop-color="#4c20b8"/>
<stop offset="0.198" stop-color="#6c1ca8"/>
<stop offset="0.256" stop-color="#8c2898"/>
<stop offset="0.291" stop-color="#c05868"/>
<stop offset="0.326" stop-color="#e07a40"/>
<stop offset="0.43" stop-color="#f0a030"/>
<stop offset="0.523" stop-color="#f8b020"/>
<stop offset="0.558" stop-color="#ffc838"/>
<stop offset="0.66" stop-color="#ffcc38"/>
<stop offset="0.70" stop-color="#f8a020"/>
<stop offset="0.74" stop-color="#c85060"/>
<stop offset="0.775" stop-color="#6a24a0"/>
<stop offset="0.83" stop-color="#3c22b0" stop-opacity="0.8"/>
<stop offset="0.93" stop-color="#2c1c98" stop-opacity="0.5"/>
<stop offset="1" stop-color="#201880" stop-opacity="0"/>
</linearGradient>
<clipPath id="gp"><rect x="860" y="1" width="80" height="781"/></clipPath>
</defs>
<rect x="1" y="1" width="817" height="781" fill="#040404"/>
<g filter="url(#nb)" fill="#1a1a88"><rect x="1" y="1" width="817" height="781" fill="url(#p1)"/><rect x="1" y="1" width="817" height="781" fill="url(#p2)"/></g>
<g filter="url(#bl)">
<rect x="2" y="295" width="13" height="1.6" fill="#2a28b8" opacity="0.52"/><rect x="60" y="295" width="14" height="1.6" fill="#2a28b8" opacity="0.25"/><rect x="83" y="294.5" width="7" height="1.6" fill="#2a28b8" opacity="0.43"/><rect x="92" y="295" width="15" height="1.6" fill="#2a28b8" opacity="0.27"/><rect x="121" y="294.5" width="10" height="1.6" fill="#2a28b8" opacity="0.26"/><rect x="142" y="294.5" width="11" height="1.6" fill="#2a28b8" opacity="0.59"/><rect x="166" y="295" width="6" height="1.6" fill="#2a28b8" opacity="0.42"/><rect x="184" y="295" width="14" height="1.6" fill="#2a28b8" opacity="0.59"/><rect x="206" y="295.5" width="8" height="1.6" fill="#2a28b8" opacity="0.27"/><rect x="218" y="295" width="8" height="1.6" fill="#2a28b8" opacity="0.53"/><rect x="237" y="295" width="4" height="1.6" fill="#2a28b8" opacity="0.23"/><rect x="248" y="295" width="8" height="1.6" fill="#2a28b8" opacity="0.27"/><rect x="265" y="295" width="15" height="1.6" fill="#2a28b8" opacity="0.59"/><rect x="282" y="295.5" width="15" height="1.6" fill="#2a28b8" opacity="0.21"/><rect x="311" y="294.5" width="10" height="1.6" fill="#2a28b8" opacity="0.38"/><rect x="334" y="295" width="6" height="1.6" fill="#2a28b8" opacity="0.25"/><rect x="345" y="295" width="11" height="1.6" fill="#2a28b8" opacity="0.56"/><rect x="362" y="295" width="16" height="1.6" fill="#2a28b8" opacity="0.54"/><rect x="393" y="295" width="7" height="1.6" fill="#2a28b8" opacity="0.57"/><rect x="425" y="295" width="5" height="1.6" fill="#2a28b8" opacity="0.32"/><rect x="444" y="295" width="5" height="1.6" fill="#2a28b8" opacity="0.60"/><rect x="453" y="295.5" width="15" height="1.6" fill="#2a28b8" opacity="0.21"/><rect x="481" y="295" width="13" height="1.6" fill="#2a28b8" opacity="0.38"/><rect x="502" y="294.5" width="6" height="1.6" fill="#2a28b8" opacity="0.52"/><rect x="515" y="295" width="7" height="1.6" fill="#2a28b8" opacity="0.45"/><rect x="536" y="295.5" width="10" height="1.6" fill="#2a28b8" opacity="0.35"/><rect x="548" y="295.5" width="10" height="1.6" fill="#2a28b8" opacity="0.57"/><rect x="584" y="295" width="11" height="1.6" fill="#2a28b8" opacity="0.39"/><rect x="601" y="295" width="11" height="1.6" fill="#2a28b8" opacity="0.25"/><rect x="622" y="295.5" width="6" height="1.6" fill="#2a28b8" opacity="0.55"/><rect x="632" y="295" width="5" height="1.6" fill="#2a28b8" opacity="0.23"/><rect x="651" y="294.5" width="16" height="1.6" fill="#2a28b8" opacity="0.50"/><rect x="692" y="295" width="11" height="1.6" fill="#2a28b8" opacity="0.58"/><rect x="710" y="294.5" width="14" height="1.6" fill="#2a28b8" opacity="0.39"/><rect x="738" y="295" width="8" height="1.6" fill="#2a28b8" opacity="0.39"/><rect x="756" y="295" width="14" height="1.6" fill="#2a28b8" opacity="0.34"/><rect x="812" y="295" width="5" height="1.6" fill="#2a28b8" opacity="0.58"/><rect x="40" y="295" width="14" height="1.6" fill="#7038c0" opacity="0.45"/></g>
<g filter="url(#bl)">
<path d="M468.4,140 L474.6,140 L475.5,281 L475,335 L468.5,335 L467.6,281 Z" fill="#3a1060" opacity="0.6"/>
<path d="M469.6,17 L473.1,17 L473.8,150 L474.5,240 L475.3,281 L474.9,320 L474.1,340 L473.6,440 L469.6,440 L469.2,340 L468.4,320 L467.8,281 L468.6,240 L469.2,150 Z" fill="url(#mt)"/>
<ellipse cx="471.5" cy="279" rx="3" ry="23" fill="#fffbe8"/>
<ellipse cx="471.6" cy="285" rx="2.4" ry="15" fill="#fff"/>
</g>
<rect x="462" y="10" width="20" height="440" fill="#000" filter="url(#mtx)" mask="url(#mm)"/>
<ellipse cx="444" cy="297" rx="2" ry="1.7" fill="#b03898" filter="url(#bl)"/>
<ellipse cx="524.3" cy="300" rx="2.6" ry="1.9" fill="#d85068" filter="url(#bl)"/>
<rect x="523" y="302" width="2" height="12" fill="#3022b0" opacity="0.3" filter="url(#bl)"/>
<rect x="3" y="3" width="311" height="45" fill="#fff"/>
<g font-family="Liberation Mono, monospace" font-size="11.67" fill="#111">
<text x="5" y="15">Screen Capture Time: 2025-11-07 13:13:44 UTC</text>
<text x="5" y="29">143048017 Hz</text>
<text x="5" y="43">Config = V8</text>
</g>
<rect x="5" y="53" width="99" height="15" fill="url(#cb)"/>
<rect x="5" y="68" width="99" height="24" fill="#fff"/>
<rect x="8" y="69" width="1" height="4" fill="#000"/><rect x="12" y="69" width="1" height="4" fill="#000"/><rect x="17" y="69" width="1" height="4" fill="#000"/><rect x="21" y="69" width="1" height="4" fill="#000"/><rect x="26" y="69" width="1" height="7" fill="#000"/><rect x="30" y="69" width="1" height="4" fill="#000"/><rect x="35" y="69" width="1" height="4" fill="#000"/><rect x="39" y="69" width="1" height="4" fill="#000"/><rect x="44" y="69" width="1" height="4" fill="#000"/><rect x="48" y="69" width="1" height="10" fill="#000"/><rect x="52" y="69" width="1" height="4" fill="#000"/><rect x="57" y="69" width="1" height="4" fill="#000"/><rect x="61" y="69" width="1" height="4" fill="#000"/><rect x="66" y="69" width="1" height="4" fill="#000"/><rect x="70" y="69" width="1" height="7" fill="#000"/><rect x="75" y="69" width="1" height="4" fill="#000"/><rect x="79" y="69" width="1" height="4" fill="#000"/><rect x="84" y="69" width="1" height="4" fill="#000"/><rect x="88" y="69" width="1" height="4" fill="#000"/><rect x="92" y="69" width="1" height="10" fill="#000"/><rect x="97" y="69" width="1" height="4" fill="#000"/><rect x="101" y="69" width="1" height="4" fill="#000"/><rect x="5" y="68" width="99" height="1" fill="#000"/>
<g font-family="Liberation Sans, sans-serif" font-size="11" fill="#000"><text x="4.8" y="89.7">-80 dB -60</text><text x="83.8" y="89.7">-40</text></g>
<g font-family="Liberation Sans, sans-serif" font-size="10.8" fill="#fff"><rect x="13" y="760" width="1" height="20" fill="#fff"/><text transform="translate(10,778) rotate(-90)">2025-11-07 13:12:30</text><rect x="119" y="760" width="1" height="20" fill="#fff"/><text transform="translate(116,778) rotate(-90)">2025-11-07 13:12:40</text><rect x="234" y="760" width="1" height="20" fill="#fff"/><text transform="translate(231,778) rotate(-90)">2025-11-07 13:12:50</text><rect x="348" y="760" width="1" height="20" fill="#fff"/><text transform="translate(345,778) rotate(-90)">2025-11-07 13:13:00</text><rect x="463" y="760" width="1" height="20" fill="#fff"/><text transform="translate(460,778) rotate(-90)">2025-11-07 13:13:10</text><rect x="577" y="760" width="1" height="20" fill="#fff"/><text transform="translate(574,778) rotate(-90)">2025-11-07 13:13:20</text><rect x="692" y="760" width="1" height="20" fill="#fff"/><text transform="translate(689,778) rotate(-90)">2025-11-07 13:13:30</text><rect x="806" y="760" width="1" height="20" fill="#fff"/><text transform="translate(803,778) rotate(-90)">2025-11-07 13:13:40</text></g>
<rect x="818" y="3" width="8" height="1" fill="#000"/><rect x="818" y="11" width="8" height="1" fill="#000"/><rect x="818" y="19" width="11" height="1" fill="#000"/><rect x="818" y="26" width="8" height="1" fill="#000"/><rect x="818" y="34" width="8" height="1" fill="#000"/><rect x="818" y="42" width="8" height="1" fill="#000"/><rect x="818" y="50" width="8" height="1" fill="#000"/><rect x="818" y="58" width="8" height="1" fill="#000"/><rect x="818" y="65" width="8" height="1" fill="#000"/><rect x="818" y="73" width="8" height="1" fill="#000"/><rect x="818" y="81" width="8" height="1" fill="#000"/><rect x="818" y="89" width="8" height="1" fill="#000"/><rect x="818" y="97" width="26" height="1" fill="#000"/><rect x="818" y="104" width="8" height="1" fill="#000"/><rect x="818" y="112" width="8" height="1" fill="#000"/><rect x="818" y="120" width="8" height="1" fill="#000"/><rect x="818" y="128" width="8" height="1" fill="#000"/><rect x="818" y="136" width="8" height="1" fill="#000"/><rect x="818" y="143" width="8" height="1" fill="#000"/><rect x="818" y="151" width="8" height="1" fill="#000"/><rect x="818" y="159" width="8" height="1" fill="#000"/><rect x="818" y="167" width="8" height="1" fill="#000"/><rect x="818" y="175" width="11" height="1" fill="#000"/><rect x="818" y="183" width="8" height="1" fill="#000"/><rect x="818" y="190" width="8" height="1" fill="#000"/><rect x="818" y="198" width="8" height="1" fill="#000"/><rect x="818" y="206" width="8" height="1" fill="#000"/><rect x="818" y="214" width="8" height="1" fill="#000"/><rect x="818" y="222" width="8" height="1" fill="#000"/><rect x="818" y="229" width="8" height="1" fill="#000"/><rect x="818" y="237" width="8" height="1" fill="#000"/><rect x="818" y="245" width="8" height="1" fill="#000"/><rect x="818" y="253" width="26" height="1" fill="#000"/><rect x="818" y="261" width="8" height="1" fill="#000"/><rect x="818" y="268" width="8" height="1" fill="#000"/><rect x="818" y="276" width="8" height="1" fill="#000"/><rect x="818" y="284" width="8" height="1" fill="#000"/><rect x="818" y="292" width="8" height="1" fill="#000"/><rect x="818" y="300" width="8" height="1" fill="#000"/><rect x="818" y="307" width="8" height="1" fill="#000"/><rect x="818" y="315" width="8" height="1" fill="#000"/><rect x="818" y="323" width="8" height="1" fill="#000"/><rect x="818" y="331" width="11" height="1" fill="#000"/><rect x="818" y="339" width="8" height="1" fill="#000"/><rect x="818" y="347" width="8" height="1" fill="#000"/><rect x="818" y="354" width="8" height="1" fill="#000"/><rect x="818" y="362" width="8" height="1" fill="#000"/><rect x="818" y="370" width="8" height="1" fill="#000"/><rect x="818" y="378" width="8" height="1" fill="#000"/><rect x="818" y="386" width="8" height="1" fill="#000"/><rect x="818" y="393" width="8" height="1" fill="#000"/><rect x="818" y="401" width="8" height="1" fill="#000"/><rect x="818" y="409" width="26" height="1" fill="#000"/><rect x="818" y="417" width="8" height="1" fill="#000"/><rect x="818" y="425" width="8" height="1" fill="#000"/><rect x="818" y="432" width="8" height="1" fill="#000"/><rect x="818" y="440" width="8" height="1" fill="#000"/><rect x="818" y="448" width="8" height="1" fill="#000"/><rect x="818" y="456" width="8" height="1" fill="#000"/><rect x="818" y="464" width="8" height="1" fill="#000"/><rect x="818" y="471" width="8" height="1" fill="#000"/><rect x="818" y="479" width="8" height="1" fill="#000"/><rect x="818" y="487" width="11" height="1" fill="#000"/><rect x="818" y="495" width="8" height="1" fill="#000"/><rect x="818" y="503" width="8" height="1" fill="#000"/><rect x="818" y="511" width="8" height="1" fill="#000"/><rect x="818" y="518" width="8" height="1" fill="#000"/><rect x="818" y="526" width="8" height="1" fill="#000"/><rect x="818" y="534" width="8" height="1" fill="#000"/><rect x="818" y="542" width="8" height="1" fill="#000"/><rect x="818" y="550" width="8" height="1" fill="#000"/><rect x="818" y="557" width="8" height="1" fill="#000"/><rect x="818" y="565" width="26" height="1" fill="#000"/><rect x="818" y="573" width="8" height="1" fill="#000"/><rect x="818" y="581" width="8" height="1" fill="#000"/><rect x="818" y="589" width="8" height="1" fill="#000"/><rect x="818" y="596" width="8" height="1" fill="#000"/><rect x="818" y="604" width="8" height="1" fill="#000"/><rect x="818" y="612" width="8" height="1" fill="#000"/><rect x="818" y="620" width="8" height="1" fill="#000"/><rect x="818" y="628" width="8" height="1" fill="#000"/><rect x="818" y="635" width="8" height="1" fill="#000"/><rect x="818" y="643" width="11" height="1" fill="#000"/><rect x="818" y="651" width="8" height="1" fill="#000"/><rect x="818" y="659" width="8" height="1" fill="#000"/><rect x="818" y="667" width="8" height="1" fill="#000"/><rect x="818" y="675" width="8" height="1" fill="#000"/><rect x="818" y="682" width="8" height="1" fill="#000"/><rect x="818" y="690" width="8" height="1" fill="#000"/><rect x="818" y="698" width="8" height="1" fill="#000"/><rect x="818" y="706" width="8" height="1" fill="#000"/><rect x="818" y="714" width="8" height="1" fill="#000"/><rect x="818" y="721" width="26" height="1" fill="#000"/><rect x="818" y="729" width="8" height="1" fill="#000"/><rect x="818" y="737" width="8" height="1" fill="#000"/><rect x="818" y="745" width="8" height="1" fill="#000"/><rect x="818" y="753" width="8" height="1" fill="#000"/><rect x="818" y="760" width="8" height="1" fill="#000"/><rect x="818" y="768" width="8" height="1" fill="#000"/><rect x="818" y="776" width="8" height="1" fill="#000"/>
<g fill="#16168c"><rect x="823" y="9" width="2" height="1"/><rect x="825" y="10" width="2" height="1"/><rect x="827" y="11" width="2" height="1"/><rect x="829" y="12" width="2" height="1"/><rect x="831" y="13" width="2" height="1"/><rect x="833" y="14" width="2" height="1"/><rect x="835" y="15" width="2" height="1"/><rect x="837" y="16" width="2" height="1"/><rect x="837" y="774" width="2" height="1"/><rect x="835" y="775" width="2" height="1"/><rect x="834" y="776" width="2" height="1"/><rect x="832" y="777" width="2" height="1"/><rect x="830" y="778" width="2" height="1"/><rect x="828" y="779" width="2" height="1"/><rect x="827" y="780" width="2" height="1"/><rect x="825" y="781" width="2" height="1"/><rect x="839" y="14" width="1" height="760"/></g>
<g font-family="Liberation Mono, monospace" font-size="11.67" fill="#5a5a5a"><text transform="translate(849,97) rotate(90)" text-anchor="middle">143050400</text><text transform="translate(849,253) rotate(90)" text-anchor="middle">143050200</text><text transform="translate(849,409) rotate(90)" text-anchor="middle">143050000</text><text transform="translate(849,565) rotate(90)" text-anchor="middle">143049800</text><text transform="translate(849,721) rotate(90)" text-anchor="middle">143049600 Hz</text></g>
<rect x="860" y="1" width="80" height="781" fill="#505050"/>
<rect x="860" y="1" width="80" height="12" fill="#000"/>
<rect x="860" y="778" width="80" height="4" fill="#000"/>
<g fill="#000"><rect x="860" y="13" width="0" height="1"/><rect x="860" y="14" width="0" height="1"/><rect x="860" y="15" width="1" height="1"/><rect x="860" y="16" width="1" height="1"/><rect x="860" y="17" width="5" height="1"/><rect x="860" y="18" width="2" height="1"/><rect x="860" y="19" width="2" height="1"/><rect x="860" y="20" width="2" height="1"/><rect x="860" y="21" width="1" height="1"/><rect x="860" y="22" width="0" height="1"/><rect x="860" y="23" width="8" height="1"/><rect x="860" y="24" width="7" height="1"/><rect x="860" y="25" width="6" height="1"/><rect x="860" y="26" width="7" height="1"/><rect x="860" y="27" width="11" height="1"/><rect x="860" y="28" width="9" height="1"/><rect x="860" y="29" width="3" height="1"/><rect x="860" y="30" width="5" height="1"/><rect x="860" y="31" width="4" height="1"/><rect x="860" y="32" width="4" height="1"/><rect x="860" y="33" width="1" height="1"/><rect x="860" y="34" width="15" height="1"/><rect x="860" y="35" width="13" height="1"/><rect x="860" y="36" width="14" height="1"/><rect x="860" y="37" width="13" height="1"/><rect x="860" y="38" width="3" height="1"/><rect x="860" y="39" width="17" height="1"/><rect x="860" y="40" width="1" height="1"/><rect x="860" y="41" width="0" height="1"/><rect x="860" y="42" width="0" height="1"/><rect x="860" y="43" width="3" height="1"/><rect x="860" y="44" width="19" height="1"/><rect x="860" y="45" width="20" height="1"/><rect x="860" y="46" width="21" height="1"/><rect x="860" y="47" width="2" height="1"/><rect x="860" y="48" width="14" height="1"/><rect x="860" y="49" width="17" height="1"/><rect x="860" y="50" width="2" height="1"/><rect x="860" y="51" width="0" height="1"/><rect x="860" y="52" width="0" height="1"/><rect x="860" y="53" width="0" height="1"/><rect x="860" y="54" width="20" height="1"/><rect x="860" y="55" width="13" height="1"/><rect x="860" y="56" width="14" height="1"/><rect x="860" y="57" width="16" height="1"/><rect x="860" y="58" width="13" height="1"/><rect x="860" y="59" width="16" height="1"/><rect x="860" y="60" width="9" height="1"/><rect x="860" y="61" width="11" height="1"/><rect x="860" y="62" width="9" height="1"/><rect x="860" y="63" width="10" height="1"/><rect x="860" y="64" width="7" height="1"/><rect x="860" y="65" width="15" height="1"/><rect x="860" y="66" width="16" height="1"/><rect x="860" y="67" width="17" height="1"/><rect x="860" y="68" width="10" height="1"/><rect x="860" y="69" width="13" height="1"/><rect x="860" y="70" width="11" height="1"/><rect x="860" y="71" width="14" height="1"/><rect x="860" y="72" width="12" height="1"/><rect x="860" y="73" width="14" height="1"/><rect x="860" y="74" width="15" height="1"/><rect x="860" y="75" width="14" height="1"/><rect x="860" y="76" width="14" height="1"/><rect x="860" y="77" width="10" height="1"/><rect x="860" y="78" width="9" height="1"/><rect x="860" y="79" width="12" height="1"/><rect x="860" y="80" width="9" height="1"/><rect x="860" y="81" width="8" height="1"/><rect x="860" y="82" width="8" height="1"/><rect x="860" y="83" width="13" height="1"/><rect x="860" y="84" width="13" height="1"/><rect x="860" y="85" width="13" height="1"/><rect x="860" y="86" width="12" height="1"/><rect x="860" y="87" width="11" height="1"/><rect x="860" y="88" width="2" height="1"/><rect x="860" y="89" width="12" height="1"/><rect x="860" y="90" width="10" height="1"/><rect x="860" y="91" width="10" height="1"/><rect x="860" y="92" width="1" height="1"/><rect x="860" y="93" width="11" height="1"/><rect x="860" y="94" width="13" height="1"/><rect x="860" y="95" width="8" height="1"/><rect x="860" y="96" width="9" height="1"/><rect x="860" y="97" width="14" height="1"/><rect x="860" y="98" width="13" height="1"/><rect x="860" y="99" width="15" height="1"/><rect x="860" y="100" width="12" height="1"/><rect x="860" y="101" width="15" height="1"/><rect x="860" y="102" width="14" height="1"/><rect x="860" y="103" width="0" height="1"/><rect x="860" y="104" width="0" height="1"/><rect x="860" y="105" width="0" height="1"/><rect x="860" y="106" width="1" height="1"/><rect x="860" y="107" width="15" height="1"/><rect x="860" y="108" width="19" height="1"/><rect x="860" y="109" width="15" height="1"/><rect x="860" y="110" width="14" height="1"/><rect x="860" y="111" width="10" height="1"/><rect x="860" y="112" width="3" height="1"/><rect x="860" y="113" width="2" height="1"/><rect x="860" y="114" width="2" height="1"/><rect x="860" y="115" width="3" height="1"/><rect x="860" y="116" width="1" height="1"/><rect x="860" y="117" width="3" height="1"/><rect x="860" y="118" width="20" height="1"/><rect x="860" y="119" width="20" height="1"/><rect x="860" y="120" width="12" height="1"/><rect x="860" y="121" width="14" height="1"/><rect x="860" y="122" width="14" height="1"/><rect x="860" y="123" width="13" height="1"/><rect x="860" y="124" width="11" height="1"/><rect x="860" y="125" width="9" height="1"/><rect x="860" y="126" width="19" height="1"/><rect x="860" y="127" width="12" height="1"/><rect x="860" y="128" width="10" height="1"/><rect x="860" y="129" width="10" height="1"/><rect x="860" y="130" width="16" height="1"/><rect x="860" y="131" width="17" height="1"/><rect x="860" y="132" width="10" height="1"/><rect x="860" y="133" width="13" height="1"/><rect x="860" y="134" width="1" height="1"/><rect x="860" y="135" width="12" height="1"/><rect x="860" y="136" width="4" height="1"/><rect x="860" y="137" width="19" height="1"/><rect x="860" y="138" width="19" height="1"/><rect x="860" y="139" width="2" height="1"/><rect x="860" y="140" width="3" height="1"/><rect x="860" y="141" width="5" height="1"/><rect x="860" y="142" width="15" height="1"/><rect x="860" y="143" width="15" height="1"/><rect x="860" y="144" width="14" height="1"/><rect x="860" y="145" width="12" height="1"/><rect x="860" y="146" width="13" height="1"/><rect x="860" y="147" width="12" height="1"/><rect x="860" y="148" width="1" height="1"/><rect x="860" y="149" width="9" height="1"/><rect x="860" y="150" width="9" height="1"/><rect x="860" y="151" width="9" height="1"/><rect x="860" y="152" width="7" height="1"/><rect x="860" y="153" width="10" height="1"/><rect x="860" y="154" width="11" height="1"/><rect x="860" y="155" width="20" height="1"/><rect x="860" y="156" width="17" height="1"/><rect x="860" y="157" width="9" height="1"/><rect x="860" y="158" width="8" height="1"/><rect x="860" y="159" width="7" height="1"/><rect x="860" y="160" width="7" height="1"/><rect x="860" y="161" width="6" height="1"/><rect x="860" y="162" width="10" height="1"/><rect x="860" y="163" width="10" height="1"/><rect x="860" y="164" width="9" height="1"/><rect x="860" y="165" width="10" height="1"/><rect x="860" y="166" width="9" height="1"/><rect x="860" y="167" width="18" height="1"/><rect x="860" y="168" width="13" height="1"/><rect x="860" y="169" width="3" height="1"/><rect x="860" y="170" width="16" height="1"/><rect x="860" y="171" width="14" height="1"/><rect x="860" y="172" width="9" height="1"/><rect x="860" y="173" width="12" height="1"/><rect x="860" y="174" width="11" height="1"/><rect x="860" y="175" width="3" height="1"/><rect x="860" y="176" width="9" height="1"/><rect x="860" y="177" width="18" height="1"/><rect x="860" y="178" width="19" height="1"/><rect x="860" y="179" width="15" height="1"/><rect x="860" y="180" width="16" height="1"/><rect x="860" y="181" width="16" height="1"/><rect x="860" y="182" width="9" height="1"/><rect x="860" y="183" width="8" height="1"/><rect x="860" y="184" width="3" height="1"/><rect x="860" y="185" width="9" height="1"/><rect x="860" y="186" width="10" height="1"/><rect x="860" y="187" width="2" height="1"/><rect x="860" y="188" width="15" height="1"/><rect x="860" y="189" width="16" height="1"/><rect x="860" y="190" width="13" height="1"/><rect x="860" y="191" width="14" height="1"/><rect x="860" y="192" width="14" height="1"/><rect x="860" y="193" width="20" height="1"/><rect x="860" y="194" width="14" height="1"/><rect x="860" y="195" width="17" height="1"/><rect x="860" y="196" width="14" height="1"/><rect x="860" y="197" width="14" height="1"/><rect x="860" y="198" width="14" height="1"/><rect x="860" y="199" width="12" height="1"/><rect x="860" y="200" width="15" height="1"/><rect x="860" y="201" width="18" height="1"/><rect x="860" y="202" width="19" height="1"/><rect x="860" y="203" width="15" height="1"/><rect x="860" y="204" width="19" height="1"/><rect x="860" y="205" width="15" height="1"/><rect x="860" y="206" width="4" height="1"/><rect x="860" y="207" width="17" height="1"/><rect x="860" y="208" width="13" height="1"/><rect x="860" y="209" width="14" height="1"/><rect x="860" y="210" width="18" height="1"/><rect x="860" y="211" width="20" height="1"/><rect x="860" y="212" width="21" height="1"/><rect x="860" y="213" width="19" height="1"/><rect x="860" y="214" width="18" height="1"/><rect x="860" y="215" width="13" height="1"/><rect x="860" y="216" width="13" height="1"/><rect x="860" y="217" width="11" height="1"/><rect x="860" y="218" width="13" height="1"/><rect x="860" y="219" width="10" height="1"/><rect x="860" y="220" width="10" height="1"/><rect x="860" y="221" width="12" height="1"/><rect x="860" y="222" width="4" height="1"/><rect x="860" y="223" width="3" height="1"/><rect x="860" y="224" width="16" height="1"/><rect x="860" y="225" width="19" height="1"/><rect x="860" y="226" width="19" height="1"/><rect x="860" y="227" width="17" height="1"/><rect x="860" y="228" width="20" height="1"/><rect x="860" y="229" width="20" height="1"/><rect x="860" y="230" width="1" height="1"/><rect x="860" y="231" width="0" height="1"/><rect x="860" y="232" width="0" height="1"/><rect x="860" y="233" width="14" height="1"/><rect x="860" y="234" width="0" height="1"/><rect x="860" y="235" width="16" height="1"/><rect x="860" y="236" width="18" height="1"/><rect x="860" y="237" width="12" height="1"/><rect x="860" y="238" width="13" height="1"/><rect x="860" y="239" width="4" height="1"/><rect x="860" y="240" width="4" height="1"/><rect x="860" y="241" width="5" height="1"/><rect x="860" y="242" width="5" height="1"/><rect x="860" y="243" width="6" height="1"/><rect x="860" y="244" width="4" height="1"/><rect x="860" y="245" width="4" height="1"/><rect x="860" y="246" width="4" height="1"/><rect x="860" y="247" width="2" height="1"/><rect x="860" y="248" width="13" height="1"/><rect x="860" y="249" width="15" height="1"/><rect x="860" y="250" width="13" height="1"/><rect x="860" y="251" width="16" height="1"/><rect x="860" y="252" width="16" height="1"/><rect x="860" y="253" width="14" height="1"/><rect x="860" y="254" width="1" height="1"/><rect x="860" y="255" width="2" height="1"/><rect x="860" y="256" width="3" height="1"/><rect x="860" y="257" width="0" height="1"/><rect x="860" y="258" width="21" height="1"/><rect x="860" y="259" width="20" height="1"/><rect x="860" y="260" width="20" height="1"/><rect x="860" y="261" width="21" height="1"/><rect x="860" y="262" width="20" height="1"/><rect x="860" y="263" width="22" height="1"/><rect x="860" y="264" width="21" height="1"/><rect x="860" y="265" width="27" height="1"/><rect x="860" y="266" width="26" height="1"/><rect x="860" y="267" width="25" height="1"/><rect x="860" y="268" width="14" height="1"/><rect x="860" y="269" width="17" height="1"/><rect x="860" y="270" width="17" height="1"/><rect x="860" y="271" width="27" height="1"/><rect x="860" y="272" width="13" height="1"/><rect x="860" y="273" width="13" height="1"/><rect x="860" y="274" width="22" height="1"/><rect x="860" y="275" width="11" height="1"/><rect x="860" y="276" width="19" height="1"/><rect x="860" y="277" width="18" height="1"/><rect x="860" y="278" width="18" height="1"/><rect x="860" y="279" width="18" height="1"/><rect x="860" y="280" width="20" height="1"/><rect x="860" y="281" width="18" height="1"/><rect x="860" y="282" width="21" height="1"/><rect x="860" y="283" width="23" height="1"/><rect x="860" y="284" width="21" height="1"/><rect x="860" y="285" width="12" height="1"/><rect x="860" y="286" width="11" height="1"/><rect x="860" y="287" width="22" height="1"/><rect x="860" y="288" width="22" height="1"/><rect x="860" y="289" width="24" height="1"/><rect x="860" y="290" width="26" height="1"/><rect x="860" y="291" width="24" height="1"/><rect x="860" y="292" width="24" height="1"/><rect x="860" y="293" width="19" height="1"/><rect x="860" y="294" width="21" height="1"/><rect x="860" y="295" width="21" height="1"/><rect x="860" y="296" width="20" height="1"/><rect x="860" y="297" width="20" height="1"/><rect x="860" y="298" width="19" height="1"/><rect x="860" y="299" width="27" height="1"/><rect x="860" y="300" width="24" height="1"/><rect x="860" y="301" width="26" height="1"/><rect x="860" y="302" width="1" height="1"/><rect x="860" y="303" width="24" height="1"/><rect x="860" y="304" width="25" height="1"/><rect x="860" y="305" width="21" height="1"/><rect x="860" y="306" width="24" height="1"/><rect x="860" y="307" width="14" height="1"/><rect x="860" y="308" width="16" height="1"/><rect x="860" y="309" width="16" height="1"/><rect x="860" y="310" width="1" height="1"/><rect x="860" y="311" width="3" height="1"/><rect x="860" y="312" width="4" height="1"/><rect x="860" y="313" width="3" height="1"/><rect x="860" y="314" width="4" height="1"/><rect x="860" y="315" width="4" height="1"/><rect x="860" y="316" width="15" height="1"/><rect x="860" y="317" width="19" height="1"/><rect x="860" y="318" width="17" height="1"/><rect x="860" y="319" width="2" height="1"/><rect x="860" y="320" width="19" height="1"/><rect x="860" y="321" width="1" height="1"/><rect x="860" y="322" width="5" height="1"/><rect x="860" y="323" width="5" height="1"/><rect x="860" y="324" width="12" height="1"/><rect x="860" y="325" width="14" height="1"/><rect x="860" y="326" width="12" height="1"/><rect x="860" y="327" width="4" height="1"/><rect x="860" y="328" width="16" height="1"/><rect x="860" y="329" width="13" height="1"/><rect x="860" y="330" width="14" height="1"/><rect x="860" y="331" width="15" height="1"/><rect x="860" y="332" width="0" height="1"/><rect x="860" y="333" width="9" height="1"/><rect x="860" y="334" width="9" height="1"/><rect x="860" y="335" width="8" height="1"/><rect x="860" y="336" width="7" height="1"/><rect x="860" y="337" width="10" height="1"/><rect x="860" y="338" width="10" height="1"/><rect x="860" y="339" width="10" height="1"/><rect x="860" y="340" width="4" height="1"/><rect x="860" y="341" width="4" height="1"/><rect x="860" y="342" width="5" height="1"/><rect x="860" y="343" width="16" height="1"/><rect x="860" y="344" width="0" height="1"/><rect x="860" y="345" width="18" height="1"/><rect x="860" y="346" width="3" height="1"/><rect x="860" y="347" width="17" height="1"/><rect x="860" y="348" width="19" height="1"/><rect x="860" y="349" width="19" height="1"/><rect x="860" y="350" width="18" height="1"/><rect x="860" y="351" width="14" height="1"/><rect x="860" y="352" width="15" height="1"/><rect x="860" y="353" width="15" height="1"/><rect x="860" y="354" width="2" height="1"/><rect x="860" y="355" width="0" height="1"/><rect x="860" y="356" width="2" height="1"/><rect x="860" y="357" width="14" height="1"/><rect x="860" y="358" width="2" height="1"/><rect x="860" y="359" width="0" height="1"/><rect x="860" y="360" width="14" height="1"/><rect x="860" y="361" width="15" height="1"/><rect x="860" y="362" width="13" height="1"/><rect x="860" y="363" width="14" height="1"/><rect x="860" y="364" width="8" height="1"/><rect x="860" y="365" width="6" height="1"/><rect x="860" y="366" width="7" height="1"/><rect x="860" y="367" width="6" height="1"/><rect x="860" y="368" width="6" height="1"/><rect x="860" y="369" width="16" height="1"/><rect x="860" y="370" width="18" height="1"/><rect x="860" y="371" width="19" height="1"/><rect x="860" y="372" width="19" height="1"/><rect x="860" y="373" width="17" height="1"/><rect x="860" y="374" width="1" height="1"/><rect x="860" y="375" width="15" height="1"/><rect x="860" y="376" width="18" height="1"/><rect x="860" y="377" width="17" height="1"/><rect x="860" y="378" width="17" height="1"/><rect x="860" y="379" width="19" height="1"/><rect x="860" y="380" width="7" height="1"/><rect x="860" y="381" width="10" height="1"/><rect x="860" y="382" width="14" height="1"/><rect x="860" y="383" width="2" height="1"/><rect x="860" y="384" width="16" height="1"/><rect x="860" y="385" width="18" height="1"/><rect x="860" y="386" width="16" height="1"/><rect x="860" y="387" width="17" height="1"/><rect x="860" y="388" width="15" height="1"/><rect x="860" y="389" width="13" height="1"/><rect x="860" y="390" width="13" height="1"/><rect x="860" y="391" width="7" height="1"/><rect x="860" y="392" width="4" height="1"/><rect x="860" y="393" width="0" height="1"/><rect x="860" y="394" width="4" height="1"/><rect x="860" y="395" width="3" height="1"/><rect x="860" y="396" width="5" height="1"/><rect x="860" y="397" width="5" height="1"/><rect x="860" y="398" width="10" height="1"/><rect x="860" y="399" width="9" height="1"/><rect x="860" y="400" width="14" height="1"/><rect x="860" y="401" width="8" height="1"/><rect x="860" y="402" width="13" height="1"/><rect x="860" y="403" width="17" height="1"/><rect x="860" y="404" width="13" height="1"/><rect x="860" y="405" width="3" height="1"/><rect x="860" y="406" width="4" height="1"/><rect x="860" y="407" width="4" height="1"/><rect x="860" y="408" width="12" height="1"/><rect x="860" y="409" width="11" height="1"/><rect x="860" y="410" width="0" height="1"/><rect x="860" y="411" width="7" height="1"/><rect x="860" y="412" width="6" height="1"/><rect x="860" y="413" width="5" height="1"/><rect x="860" y="414" width="9" height="1"/><rect x="860" y="415" width="7" height="1"/><rect x="860" y="416" width="8" height="1"/><rect x="860" y="417" width="13" height="1"/><rect x="860" y="418" width="9" height="1"/><rect x="860" y="419" width="2" height="1"/><rect x="860" y="420" width="13" height="1"/><rect x="860" y="421" width="13" height="1"/><rect x="860" y="422" width="12" height="1"/><rect x="860" y="423" width="9" height="1"/><rect x="860" y="424" width="17" height="1"/><rect x="860" y="425" width="14" height="1"/><rect x="860" y="426" width="13" height="1"/><rect x="860" y="427" width="8" height="1"/><rect x="860" y="428" width="11" height="1"/><rect x="860" y="429" width="7" height="1"/><rect x="860" y="430" width="12" height="1"/><rect x="860" y="431" width="9" height="1"/><rect x="860" y="432" width="8" height="1"/><rect x="860" y="433" width="13" height="1"/><rect x="860" y="434" width="12" height="1"/><rect x="860" y="435" width="10" height="1"/><rect x="860" y="436" width="10" height="1"/><rect x="860" y="437" width="2" height="1"/><rect x="860" y="438" width="10" height="1"/><rect x="860" y="439" width="15" height="1"/><rect x="860" y="440" width="12" height="1"/><rect x="860" y="441" width="14" height="1"/><rect x="860" y="442" width="8" height="1"/><rect x="860" y="443" width="11" height="1"/><rect x="860" y="444" width="10" height="1"/><rect x="860" y="445" width="9" height="1"/><rect x="860" y="446" width="8" height="1"/><rect x="860" y="447" width="16" height="1"/><rect x="860" y="448" width="16" height="1"/><rect x="860" y="449" width="11" height="1"/><rect x="860" y="450" width="9" height="1"/><rect x="860" y="451" width="11" height="1"/><rect x="860" y="452" width="13" height="1"/><rect x="860" y="453" width="16" height="1"/><rect x="860" y="454" width="2" height="1"/><rect x="860" y="455" width="9" height="1"/><rect x="860" y="456" width="9" height="1"/><rect x="860" y="457" width="5" height="1"/><rect x="860" y="458" width="5" height="1"/><rect x="860" y="459" width="6" height="1"/><rect x="860" y="460" width="7" height="1"/><rect x="860" y="461" width="10" height="1"/><rect x="860" y="462" width="11" height="1"/><rect x="860" y="463" width="11" height="1"/><rect x="860" y="464" width="14" height="1"/><rect x="860" y="465" width="13" height="1"/><rect x="860" y="466" width="13" height="1"/><rect x="860" y="467" width="12" height="1"/><rect x="860" y="468" width="13" height="1"/><rect x="860" y="469" width="13" height="1"/><rect x="860" y="470" width="11" height="1"/><rect x="860" y="471" width="10" height="1"/><rect x="860" y="472" width="1" height="1"/><rect x="860" y="473" width="0" height="1"/><rect x="860" y="474" width="2" height="1"/><rect x="860" y="475" width="2" height="1"/><rect x="860" y="476" width="0" height="1"/><rect x="860" y="477" width="7" height="1"/><rect x="860" y="478" width="7" height="1"/><rect x="860" y="479" width="8" height="1"/><rect x="860" y="480" width="9" height="1"/><rect x="860" y="481" width="10" height="1"/><rect x="860" y="482" width="8" height="1"/><rect x="860" y="483" width="11" height="1"/><rect x="860" y="484" width="9" height="1"/><rect x="860" y="485" width="10" height="1"/><rect x="860" y="486" width="10" height="1"/><rect x="860" y="487" width="8" height="1"/><rect x="860" y="488" width="14" height="1"/><rect x="860" y="489" width="15" height="1"/><rect x="860" y="490" width="1" height="1"/><rect x="860" y="491" width="12" height="1"/><rect x="860" y="492" width="5" height="1"/><rect x="860" y="493" width="5" height="1"/><rect x="860" y="494" width="2" height="1"/><rect x="860" y="495" width="8" height="1"/><rect x="860" y="496" width="19" height="1"/><rect x="860" y="497" width="15" height="1"/><rect x="860" y="498" width="18" height="1"/><rect x="860" y="499" width="16" height="1"/><rect x="860" y="500" width="14" height="1"/><rect x="860" y="501" width="13" height="1"/><rect x="860" y="502" width="13" height="1"/><rect x="860" y="503" width="16" height="1"/><rect x="860" y="504" width="15" height="1"/><rect x="860" y="505" width="17" height="1"/><rect x="860" y="506" width="12" height="1"/><rect x="860" y="507" width="15" height="1"/><rect x="860" y="508" width="12" height="1"/><rect x="860" y="509" width="10" height="1"/><rect x="860" y="510" width="11" height="1"/><rect x="860" y="511" width="11" height="1"/><rect x="860" y="512" width="13" height="1"/><rect x="860" y="513" width="2" height="1"/><rect x="860" y="514" width="8" height="1"/><rect x="860" y="515" width="9" height="1"/><rect x="860" y="516" width="1" height="1"/><rect x="860" y="517" width="1" height="1"/><rect x="860" y="518" width="3" height="1"/><rect x="860" y="519" width="3" height="1"/><rect x="860" y="520" width="17" height="1"/><rect x="860" y="521" width="13" height="1"/><rect x="860" y="522" width="17" height="1"/><rect x="860" y="523" width="4" height="1"/><rect x="860" y="524" width="6" height="1"/><rect x="860" y="525" width="2" height="1"/><rect x="860" y="526" width="4" height="1"/><rect x="860" y="527" width="12" height="1"/><rect x="860" y="528" width="10" height="1"/><rect x="860" y="529" width="10" height="1"/><rect x="860" y="530" width="10" height="1"/><rect x="860" y="531" width="14" height="1"/><rect x="860" y="532" width="14" height="1"/><rect x="860" y="533" width="14" height="1"/><rect x="860" y="534" width="13" height="1"/><rect x="860" y="535" width="12" height="1"/><rect x="860" y="536" width="12" height="1"/><rect x="860" y="537" width="11" height="1"/><rect x="860" y="538" width="11" height="1"/><rect x="860" y="539" width="10" height="1"/><rect x="860" y="540" width="8" height="1"/><rect x="860" y="541" width="9" height="1"/><rect x="860" y="542" width="6" height="1"/><rect x="860" y="543" width="7" height="1"/><rect x="860" y="544" width="8" height="1"/><rect x="860" y="545" width="11" height="1"/><rect x="860" y="546" width="10" height="1"/><rect x="860" y="547" width="7" height="1"/><rect x="860" y="548" width="19" height="1"/><rect x="860" y="549" width="17" height="1"/><rect x="860" y="550" width="16" height="1"/><rect x="860" y="551" width="16" height="1"/><rect x="860" y="552" width="18" height="1"/><rect x="860" y="553" width="18" height="1"/><rect x="860" y="554" width="6" height="1"/><rect x="860" y="555" width="7" height="1"/><rect x="860" y="556" width="6" height="1"/><rect x="860" y="557" width="8" height="1"/><rect x="860" y="558" width="8" height="1"/><rect x="860" y="559" width="9" height="1"/><rect x="860" y="560" width="14" height="1"/><rect x="860" y="561" width="11" height="1"/><rect x="860" y="562" width="13" height="1"/><rect x="860" y="563" width="11" height="1"/><rect x="860" y="564" width="13" height="1"/><rect x="860" y="565" width="17" height="1"/><rect x="860" y="566" width="12" height="1"/><rect x="860" y="567" width="11" height="1"/><rect x="860" y="568" width="11" height="1"/><rect x="860" y="569" width="10" height="1"/><rect x="860" y="570" width="10" height="1"/><rect x="860" y="571" width="2" height="1"/><rect x="860" y="572" width="5" height="1"/><rect x="860" y="573" width="16" height="1"/><rect x="860" y="574" width="1" height="1"/><rect x="860" y="575" width="14" height="1"/><rect x="860" y="576" width="15" height="1"/><rect x="860" y="577" width="15" height="1"/><rect x="860" y="578" width="13" height="1"/><rect x="860" y="579" width="13" height="1"/><rect x="860" y="580" width="16" height="1"/><rect x="860" y="581" width="15" height="1"/><rect x="860" y="582" width="6" height="1"/><rect x="860" y="583" width="16" height="1"/><rect x="860" y="584" width="2" height="1"/><rect x="860" y="585" width="5" height="1"/><rect x="860" y="586" width="14" height="1"/><rect x="860" y="587" width="18" height="1"/><rect x="860" y="588" width="11" height="1"/><rect x="860" y="589" width="11" height="1"/><rect x="860" y="590" width="8" height="1"/><rect x="860" y="591" width="10" height="1"/><rect x="860" y="592" width="11" height="1"/><rect x="860" y="593" width="13" height="1"/><rect x="860" y="594" width="9" height="1"/><rect x="860" y="595" width="14" height="1"/><rect x="860" y="596" width="7" height="1"/><rect x="860" y="597" width="6" height="1"/><rect x="860" y="598" width="10" height="1"/><rect x="860" y="599" width="10" height="1"/><rect x="860" y="600" width="8" height="1"/><rect x="860" y="601" width="1" height="1"/><rect x="860" y="602" width="13" height="1"/><rect x="860" y="603" width="16" height="1"/><rect x="860" y="604" width="17" height="1"/><rect x="860" y="605" width="16" height="1"/><rect x="860" y="606" width="13" height="1"/><rect x="860" y="607" width="11" height="1"/><rect x="860" y="608" width="11" height="1"/><rect x="860" y="609" width="18" height="1"/><rect x="860" y="610" width="14" height="1"/><rect x="860" y="611" width="14" height="1"/><rect x="860" y="612" width="7" height="1"/><rect x="860" y="613" width="12" height="1"/><rect x="860" y="614" width="10" height="1"/><rect x="860" y="615" width="9" height="1"/><rect x="860" y="616" width="6" height="1"/><rect x="860" y="617" width="4" height="1"/><rect x="860" y="618" width="4" height="1"/><rect x="860" y="619" width="2" height="1"/><rect x="860" y="620" width="15" height="1"/><rect x="860" y="621" width="6" height="1"/><rect x="860" y="622" width="10" height="1"/><rect x="860" y="623" width="7" height="1"/><rect x="860" y="624" width="7" height="1"/><rect x="860" y="625" width="19" height="1"/><rect x="860" y="626" width="17" height="1"/><rect x="860" y="627" width="18" height="1"/><rect x="860" y="628" width="16" height="1"/><rect x="860" y="629" width="19" height="1"/><rect x="860" y="630" width="17" height="1"/><rect x="860" y="631" width="16" height="1"/><rect x="860" y="632" width="4" height="1"/><rect x="860" y="633" width="19" height="1"/><rect x="860" y="634" width="13" height="1"/><rect x="860" y="635" width="14" height="1"/><rect x="860" y="636" width="15" height="1"/><rect x="860" y="637" width="16" height="1"/><rect x="860" y="638" width="15" height="1"/><rect x="860" y="639" width="13" height="1"/><rect x="860" y="640" width="14" height="1"/><rect x="860" y="641" width="13" height="1"/><rect x="860" y="642" width="13" height="1"/><rect x="860" y="643" width="13" height="1"/><rect x="860" y="644" width="16" height="1"/><rect x="860" y="645" width="11" height="1"/><rect x="860" y="646" width="9" height="1"/><rect x="860" y="647" width="9" height="1"/><rect x="860" y="648" width="10" height="1"/><rect x="860" y="649" width="9" height="1"/><rect x="860" y="650" width="14" height="1"/><rect x="860" y="651" width="11" height="1"/><rect x="860" y="652" width="8" height="1"/><rect x="860" y="653" width="16" height="1"/><rect x="860" y="654" width="13" height="1"/><rect x="860" y="655" width="14" height="1"/><rect x="860" y="656" width="14" height="1"/><rect x="860" y="657" width="17" height="1"/><rect x="860" y="658" width="14" height="1"/><rect x="860" y="659" width="2" height="1"/><rect x="860" y="660" width="16" height="1"/><rect x="860" y="661" width="14" height="1"/><rect x="860" y="662" width="11" height="1"/><rect x="860" y="663" width="11" height="1"/><rect x="860" y="664" width="10" height="1"/><rect x="860" y="665" width="11" height="1"/><rect x="860" y="666" width="11" height="1"/><rect x="860" y="667" width="10" height="1"/><rect x="860" y="668" width="10" height="1"/><rect x="860" y="669" width="14" height="1"/><rect x="860" y="670" width="9" height="1"/><rect x="860" y="671" width="10" height="1"/><rect x="860" y="672" width="17" height="1"/><rect x="860" y="673" width="19" height="1"/><rect x="860" y="674" width="18" height="1"/><rect x="860" y="675" width="19" height="1"/><rect x="860" y="676" width="16" height="1"/><rect x="860" y="677" width="13" height="1"/><rect x="860" y="678" width="9" height="1"/><rect x="860" y="679" width="0" height="1"/><rect x="860" y="680" width="4" height="1"/><rect x="860" y="681" width="15" height="1"/><rect x="860" y="682" width="12" height="1"/><rect x="860" y="683" width="11" height="1"/><rect x="860" y="684" width="14" height="1"/><rect x="860" y="685" width="14" height="1"/><rect x="860" y="686" width="15" height="1"/><rect x="860" y="687" width="16" height="1"/><rect x="860" y="688" width="12" height="1"/><rect x="860" y="689" width="4" height="1"/><rect x="860" y="690" width="2" height="1"/><rect x="860" y="691" width="5" height="1"/><rect x="860" y="692" width="2" height="1"/><rect x="860" y="693" width="3" height="1"/><rect x="860" y="694" width="14" height="1"/><rect x="860" y="695" width="15" height="1"/><rect x="860" y="696" width="18" height="1"/><rect x="860" y="697" width="16" height="1"/><rect x="860" y="698" width="12" height="1"/><rect x="860" y="699" width="12" height="1"/><rect x="860" y="700" width="12" height="1"/><rect x="860" y="701" width="13" height="1"/><rect x="860" y="702" width="2" height="1"/><rect x="860" y="703" width="3" height="1"/><rect x="860" y="704" width="1" height="1"/><rect x="860" y="705" width="5" height="1"/><rect x="860" y="706" width="1" height="1"/><rect x="860" y="707" width="5" height="1"/><rect x="860" y="708" width="4" height="1"/><rect x="860" y="709" width="6" height="1"/><rect x="860" y="710" width="7" height="1"/><rect x="860" y="711" width="5" height="1"/><rect x="860" y="712" width="9" height="1"/><rect x="860" y="713" width="18" height="1"/><rect x="860" y="714" width="10" height="1"/><rect x="860" y="715" width="14" height="1"/><rect x="860" y="716" width="1" height="1"/><rect x="860" y="717" width="18" height="1"/><rect x="860" y="718" width="7" height="1"/><rect x="860" y="719" width="17" height="1"/><rect x="860" y="720" width="10" height="1"/><rect x="860" y="721" width="10" height="1"/><rect x="860" y="722" width="14" height="1"/><rect x="860" y="723" width="18" height="1"/><rect x="860" y="724" width="16" height="1"/><rect x="860" y="725" width="18" height="1"/><rect x="860" y="726" width="17" height="1"/><rect x="860" y="727" width="12" height="1"/><rect x="860" y="728" width="14" height="1"/><rect x="860" y="729" width="18" height="1"/><rect x="860" y="730" width="16" height="1"/><rect x="860" y="731" width="17" height="1"/><rect x="860" y="732" width="7" height="1"/><rect x="860" y="733" width="8" height="1"/><rect x="860" y="734" width="9" height="1"/><rect x="860" y="735" width="14" height="1"/><rect x="860" y="736" width="11" height="1"/><rect x="860" y="737" width="14" height="1"/><rect x="860" y="738" width="13" height="1"/><rect x="860" y="739" width="2" height="1"/><rect x="860" y="740" width="11" height="1"/><rect x="860" y="741" width="11" height="1"/><rect x="860" y="742" width="11" height="1"/><rect x="860" y="743" width="8" height="1"/><rect x="860" y="744" width="1" height="1"/><rect x="860" y="745" width="0" height="1"/><rect x="860" y="746" width="3" height="1"/><rect x="860" y="747" width="1" height="1"/><rect x="860" y="748" width="17" height="1"/><rect x="860" y="749" width="16" height="1"/><rect x="860" y="750" width="10" height="1"/><rect x="860" y="751" width="9" height="1"/><rect x="860" y="752" width="6" height="1"/><rect x="860" y="753" width="3" height="1"/><rect x="860" y="754" width="3" height="1"/><rect x="860" y="755" width="0" height="1"/><rect x="860" y="756" width="3" height="1"/><rect x="860" y="757" width="2" height="1"/><rect x="860" y="758" width="4" height="1"/><rect x="860" y="759" width="15" height="1"/><rect x="860" y="760" width="15" height="1"/><rect x="860" y="761" width="17" height="1"/><rect x="860" y="762" width="18" height="1"/><rect x="860" y="763" width="16" height="1"/><rect x="860" y="764" width="16" height="1"/><rect x="860" y="765" width="8" height="1"/><rect x="860" y="766" width="6" height="1"/><rect x="860" y="767" width="7" height="1"/><rect x="860" y="768" width="15" height="1"/><rect x="860" y="769" width="17" height="1"/><rect x="860" y="770" width="16" height="1"/><rect x="860" y="771" width="15" height="1"/><rect x="860" y="772" width="10" height="1"/><rect x="860" y="773" width="4" height="1"/><rect x="860" y="774" width="7" height="1"/><rect x="860" y="775" width="5" height="1"/><rect x="860" y="776" width="7" height="1"/><rect x="860" y="777" width="9" height="1"/></g>
<g fill="#0d0d5c"><rect x="860" y="118" width="24" height="2"/><rect x="860" y="283" width="20" height="2"/><rect x="860" y="286" width="20" height="1"/><rect x="860" y="291" width="28" height="3"/><rect x="860" y="294" width="25" height="3"/><rect x="860" y="297" width="21" height="3"/><rect x="860" y="300" width="17" height="1"/><rect x="860" y="420" width="16" height="3"/><rect x="860" y="447" width="16" height="2"/><rect x="860" y="462" width="14" height="2"/><rect x="860" y="478" width="21" height="3"/><rect x="860" y="507" width="20" height="1"/><rect x="860" y="521" width="16" height="3"/><rect x="860" y="540" width="16" height="3"/><rect x="860" y="552" width="15" height="3"/><rect x="860" y="578" width="14" height="2"/><rect x="860" y="608" width="20" height="1"/><rect x="860" y="626" width="13" height="3"/><rect x="860" y="642" width="19" height="1"/><rect x="860" y="656" width="21" height="2"/><rect x="860" y="666" width="21" height="3"/><rect x="860" y="680" width="13" height="3"/><rect x="860" y="699" width="16" height="2"/><rect x="860" y="729" width="20" height="2"/><rect x="860" y="756" width="21" height="2"/></g>
<rect x="860" y="19" width="80" height="1" fill="#8e8e8e"/><rect x="860" y="97" width="80" height="1" fill="#8e8e8e"/><rect x="860" y="175" width="80" height="1" fill="#8e8e8e"/><rect x="860" y="253" width="80" height="1" fill="#8e8e8e"/><rect x="860" y="331" width="80" height="1" fill="#8e8e8e"/><rect x="860" y="409" width="80" height="1" fill="#8e8e8e"/><rect x="860" y="487" width="80" height="1" fill="#8e8e8e"/><rect x="860" y="565" width="80" height="1" fill="#8e8e8e"/><rect x="860" y="643" width="80" height="1" fill="#8e8e8e"/><rect x="860" y="721" width="80" height="1" fill="#8e8e8e"/>
<g clip-path="url(#gp)">
<polyline points="860.5,1 860.5,3 860.5,5 860.5,7 860.5,9 860.5,11 860.5,13 860.5,15 860.5,17 860.5,19 861.6,21 863.9,23 866.2,25 868.1,27 868.6,29 869.1,31 869.6,33 870.1,35 870.6,37 871.0,39 871.6,41 871.3,43 872.1,45 870.4,47 870.7,49 870.0,51 869.1,53 869.7,55 869.0,57 869.9,59 869.5,61 869.8,63 870.7,65 871.6,67 870.5,69 870.9,71 871.6,73 872.1,75 871.3,77 870.7,79 871.4,81 869.4,83 870.5,85 869.4,87 869.1,89 869.4,91 870.2,93 871.7,95 871.0,97 871.9,99 871.8,101 870.8,103 870.6,105 869.4,107 869.6,109 870.5,111 872.1,113 872.0,115 871.5,117 871.1,119 870.1,121 869.7,123 871.0,125 871.5,127 871.0,129 871.2,131 870.4,133 870.4,135 870.1,137 869.7,139 871.7,141 870.7,143 871.2,145 871.3,147 869.7,149 869.9,151 869.1,153 870.6,155 871.3,157 871.6,159 872.6,161 871.9,163 872.4,165 871.8,167 871.3,169 870.6,171 870.8,173 870.6,175 869.6,177 870.0,179 869.1,181 870.5,183 870.7,185 871.7,187 871.8,189 871.1,191 871.7,193 872.5,195 871.7,197 872.7,199 872.3,201 872.2,203 872.0,205 873.1,207 871.8,209 871.9,211 872.2,213 873.3,215 872.3,217 873.6,219 874.6,221 875.8,223 875.9,225 875.9,227 874.4,229 874.3,231 874.1,233 875.5,235 876.5,237 875.9,239 876.4,241 876.3,243 876.1,245 876.5,247 877.2,249 877.8,251 878.6,253 880.5,255 880.9,257 881.4,259 882.4,261 882.8,263 883.8,265 885.5,267 887.1,269 887.1,271 889.5,273 891.5,275 894.4,277 897.3,279 898.3,281 900.0,283 901.2,285 901.5,287 899.6,289 895.6,291 891.6,293 888.2,295 885.4,297 882.4,299 880.1,301 878.3,303 876.6,305 876.1,307 874.6,309 875.2,311 873.9,313 872.8,315 872.8,317 872.7,319 872.4,321 871.5,323 872.7,325 872.7,327 871.4,329 871.0,331 869.8,333 869.3,335 869.3,337 868.9,339 869.8,341 868.8,343 868.9,345 871.0,347 870.5,349 870.0,351 870.4,353 868.9,355 869.4,357 870.1,359 870.3,361 870.8,363 870.7,365 871.1,367 870.2,369 870.5,371 869.5,373 870.0,375 869.8,377 870.3,379 871.4,381 871.2,383 870.1,385 869.4,387 869.5,389 869.9,391 869.7,393 870.5,395 870.1,397 868.9,399 868.3,401 868.4,403 868.4,405 869.5,407 870.5,409 870.1,411 871.3,413 871.5,415 871.3,417 869.9,419 869.3,421 868.9,423 868.6,425 868.4,427 869.1,429 869.6,431 869.6,433 869.1,435 869.7,437 870.2,439 869.2,441 870.5,443 871.2,445 871.1,447 871.2,449 870.7,451 870.0,453 870.9,455 869.8,457 870.3,459 870.2,461 868.9,463 868.8,465 869.9,467 869.9,469 869.4,471 869.8,473 870.2,475 871.5,477 870.9,479 869.0,481 869.8,483 869.9,485 869.8,487 870.0,489 870.9,491 870.1,493 869.4,495 870.3,497 869.4,499 869.4,501 870.9,503 870.7,505 871.5,507 870.9,509 869.0,511 868.7,513 869.0,515 869.5,517 870.8,519 870.5,521 870.5,523 869.4,525 870.2,527 868.9,529 869.1,531 869.7,533 870.8,535 870.4,537 871.6,539 870.9,541 870.8,543 870.4,545 869.1,547 869.5,549 868.8,551 868.3,553 869.6,555 868.5,557 869.2,559 869.8,561 869.8,563 869.6,565 870.2,567 870.6,569 871.2,571 870.1,573 871.0,575 870.4,577 870.3,579 871.0,581 870.2,583 869.9,585 869.9,587 869.9,589 869.0,591 869.5,593 869.6,595 870.2,597 871.0,599 870.8,601 870.8,603 870.3,605 870.4,607 869.5,609 869.8,611 870.5,613 869.9,615 871.0,617 871.6,619 870.7,621 868.7,623 868.4,625 869.4,627 869.5,629 870.4,631 870.0,633 870.4,635 869.9,637 869.8,639 868.8,641 870.5,643 871.0,645 870.2,647 871.2,649 870.8,651 868.9,653 869.9,655 869.1,657 869.7,659 871.1,661 871.3,663 870.3,665 870.8,667 870.8,669 870.1,671 869.5,673 869.4,675 869.8,677 868.4,679 869.3,681 869.2,683 868.6,685 869.3,687 870.1,689 870.2,691 869.6,693 871.6,695 871.4,697 871.9,699 870.4,701 870.7,703 870.1,705 871.2,707 869.9,709 869.3,711 869.5,713 870.2,715 870.0,717 869.2,719 869.4,721 871.3,723 871.1,725 871.6,727 870.3,729 869.7,731 870.2,733 869.4,735 868.8,737 870.9,739 871.1,741 871.8,743 870.3,745 871.0,747 868.9,749 870.2,751 870.0,753 870.6,755 871.4,757 871.9,759 870.1,761 869.1,763 870.5,765 870.5,767 869.1,769 867.8,771 866.4,773 865.0,775 863.7,777 862.3,779 860.9,781" fill="none" stroke="#b03030" stroke-width="1.4"/>
<circle cx="873.4" cy="46.5" r="3" fill="#200000" stroke="#c03030" stroke-width="1"/>
<polyline points="861.3,8.3 868.8,9.1 871.3,12.4 876.7,15.4 882.9,18.3 887.0,21.6 891.2,24.9 886.2,29.0 890.1,31.2 893.7,33.5 897.0,35.7 896.2,39.0 893.9,41.3 889.9,43.5 887.1,45.8 884.6,48.1 890.2,51.0 897.0,54.0 890.4,57.3 891.6,59.5 894.1,61.7 895.4,63.9 892.9,66.4 894.0,69.7 896.2,73.0 892.5,76.0 888.7,78.9 892.4,81.8 897.0,84.7 897.1,87.6 897.8,90.5 894.8,93.0 892.0,95.4 893.7,98.8 901.2,101.3 901.4,104.1 900.8,106.8 900.3,109.6 900.6,112.1 902.0,114.5 902.9,117.0 904.5,119.5 905.3,121.8 905.4,124.1 905.6,126.4 905.3,128.7 906.1,131.3 906.2,134.0 906.1,136.6 907.8,140.8 906.9,144.1 904.5,147.4 907.2,149.9 908.5,152.4 911.1,154.9 910.4,157.4 908.6,159.9 909.3,162.1 910.4,164.3 910.8,166.6 911.3,168.8 911.9,171.0 912.8,173.2 912.8,175.5 912.8,177.8 912.7,180.2 914.0,182.5 913.6,184.8 912.4,187.3 910.3,189.8 913.6,193.1 915.3,196.4 916.6,199.1 917.4,201.8 918.8,204.5 919.4,207.2 916.9,209.7 917.4,212.2 919.3,214.6 920.0,217.1 921.1,219.6 921.0,222.1 921.4,224.6 922.3,227.1 922.7,229.6 922.9,231.8 923.8,234.0 924.6,236.2 924.8,238.5 924.9,240.7 926.1,242.9 926.9,245.4 927.3,247.9 928.2,250.3 929.4,252.8 930.6,255.2 932.5,257.6 934.4,260.0 935.4,262.2 937.9,264.4 939.3,266.6 942.9,269.3 945.0,272.0 945.6,274.5 946.9,277.0 947.9,279.5 948.0,282.0 946.3,284.7 945.4,287.3 945.0,290.0 942.6,292.4 939.3,294.9 937.1,297.7 934.0,300.4 931.0,303.2 927.8,305.7 925.5,308.1 923.6,310.6 920.3,313.1 920.5,315.6 919.4,318.1 914.5,321.0 908.6,323.9 911.1,328.1 908.6,330.6 907.0,333.0 905.5,335.9 902.8,338.9 887.9,342.2 882.9,345.5 888.5,348.0 894.5,350.5 897.7,353.0 900.3,355.5 894.2,357.7 890.0,359.9 883.7,362.1 890.4,365.4 882.9,369.6 887.6,372.1 892.0,374.5 887.8,377.0 882.9,379.5 887.4,382.0 892.9,384.5 888.1,387.2 882.9,390.0 883.4,393.0 886.5,394.8 882.6,396.7 883.5,398.4 883.5,400.9 886.4,402.6 883.5,404.6 885.2,407.0 882.0,410.3 885.2,412.1 882.8,414.7 890.2,417.3 881.4,420.6 887.0,422.6 885.1,424.9 881.3,426.6 879.6,429.9 885.8,432.8 887.5,435.9 882.7,438.5 885.0,441.5 882.9,444.8 885.7,448.0 883.9,449.7 886.0,451.7 882.7,454.6 886.7,457.7 883.5,459.8 885.4,461.6 882.2,464.7 883.0,466.6 887.1,469.1 883.3,472.2 883.1,475.4 882.0,478.4 887.1,480.8 881.7,483.3 886.9,486.3 883.6,488.0 887.5,491.0 879.1,493.6 887.2,496.3 885.2,498.2 885.2,500.9 882.3,502.6 885.4,504.3 888.6,507.7 881.9,510.7 882.3,513.8 885.2,516.4 882.1,519.7 887.1,522.2 882.4,524.6 886.5,526.9 882.3,529.8 885.9,531.9 881.9,533.9 885.4,536.1 882.8,539.2 882.7,541.3 885.0,543.4 882.3,545.7 882.1,548.9 887.5,551.5 886.2,553.8 881.4,555.4 889.2,558.6 882.4,561.9 886.2,564.2 883.2,566.1 883.3,567.8 885.1,569.7 883.5,572.2 882.7,573.9 885.1,576.3 882.5,578.8 886.6,581.3 882.4,582.9 881.9,584.8 886.5,588.1 882.1,590.1 886.2,592.1 883.0,594.4 887.1,596.9 882.7,599.9 885.1,601.9 882.4,604.5 885.6,606.9 882.7,610.2 887.1,612.4 882.7,614.6 885.5,617.1 883.0,618.7 885.2,620.8 885.3,624.1 883.0,626.5 887.5,628.5 885.3,631.4 884.0,634.8 887.0,637.2 881.3,638.8 886.8,641.6 882.8,643.2 887.5,646.3 885.6,649.4 882.2,652.6 889.1,655.4 883.7,657.2 887.2,659.8 881.9,662.5 885.1,664.7 882.8,667.5 881.8,669.3 887.0,672.6 880.4,675.9 887.1,677.5 885.6,679.6 882.8,682.7 886.8,685.0 882.6,686.8 883.7,690.2 889.4,692.2 883.9,695.3 885.5,697.4 882.7,700.7 887.1,702.9 881.8,706.1 886.5,708.1 878.6,710.1 886.7,713.4 882.0,715.1 885.0,717.6 886.4,720.0 890.3,722.4 878.8,725.2 887.1,726.9 882.7,729.1 886.5,731.3 882.9,734.5 887.1,737.6 886.4,740.7 883.4,742.5 882.9,744.4 885.5,746.9 881.5,749.2 886.3,752.2 883.2,754.6 886.5,756.3 883.2,759.5 886.7,761.8 883.7,763.6 886.9,766.9 876,773 870,781" fill="none" stroke="#44e044" stroke-width="1"/>
</g>
</svg></body></html>
